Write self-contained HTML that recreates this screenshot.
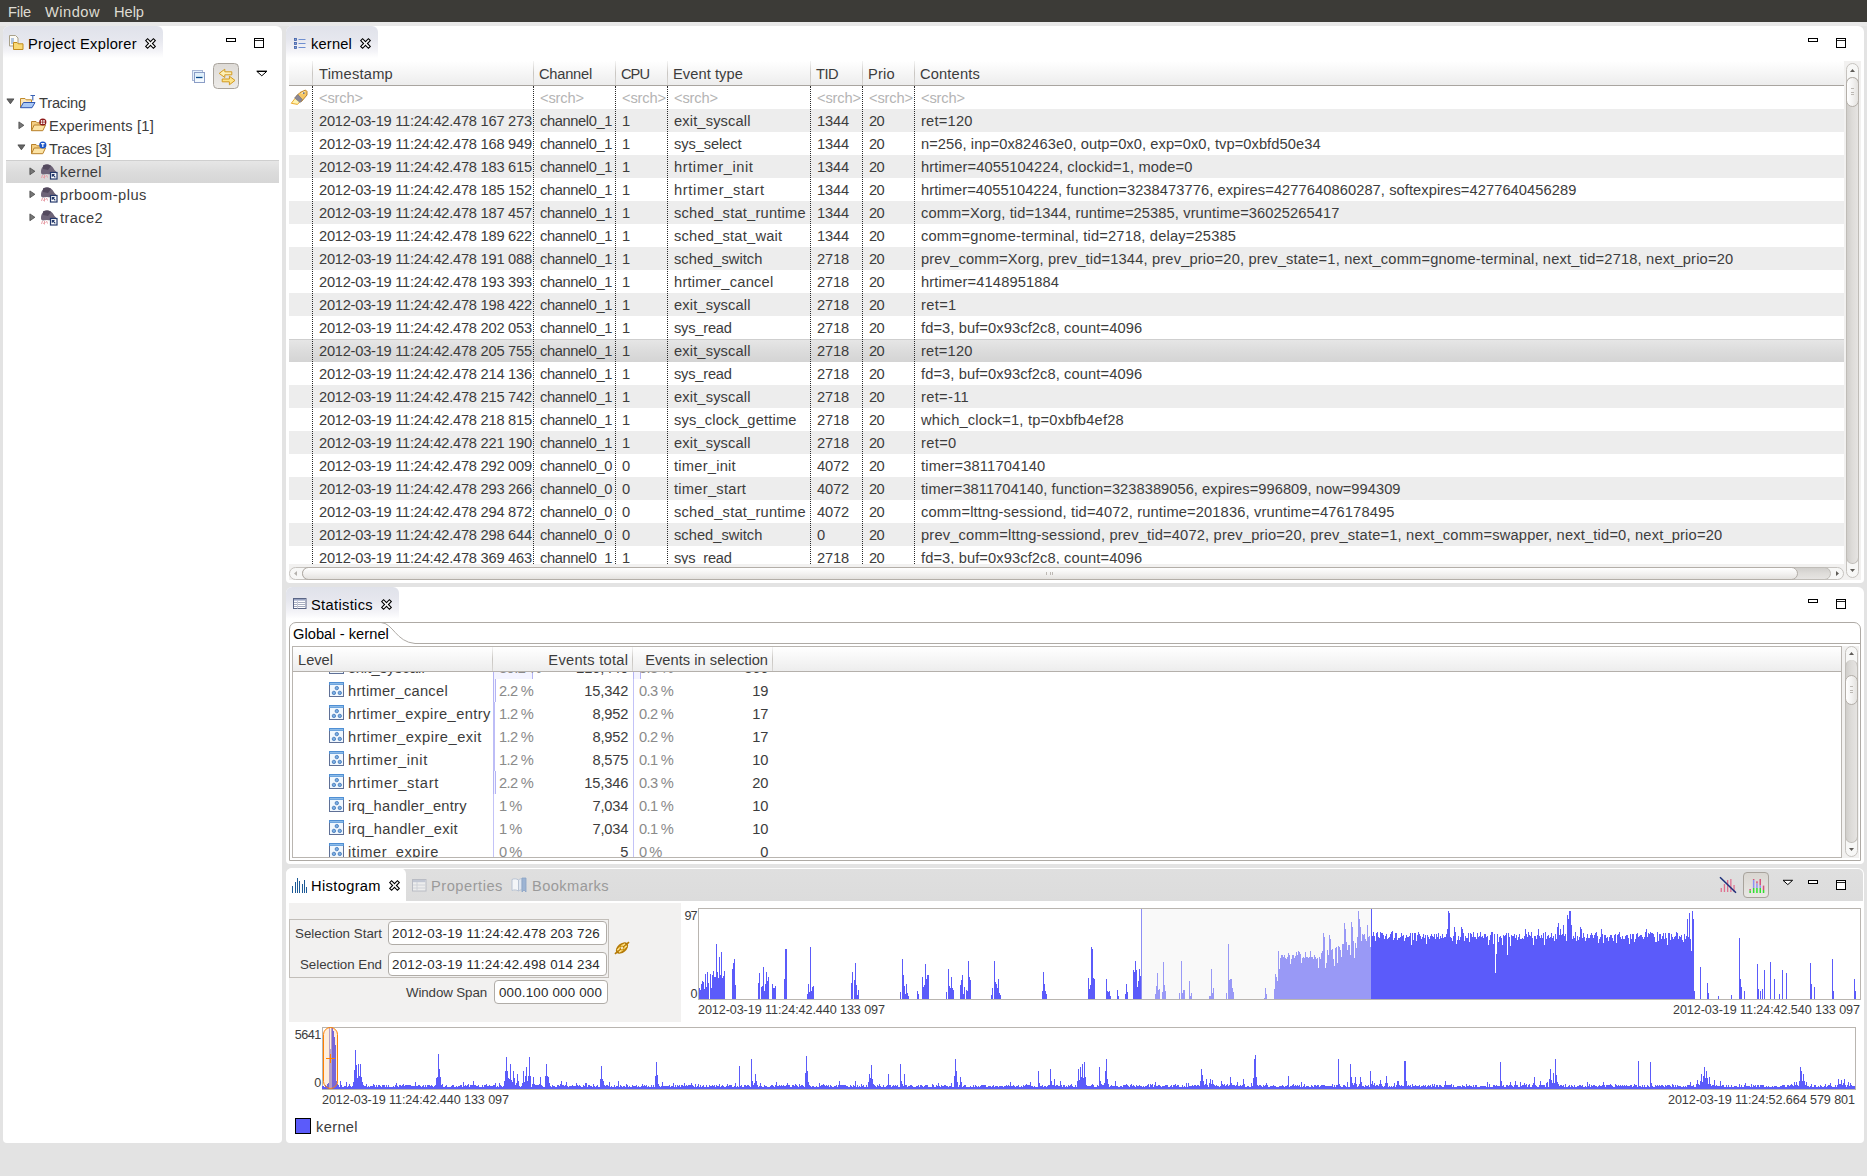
<!DOCTYPE html>
<html><head><meta charset="utf-8"><title>Tracing</title>
<style>
html,body{margin:0;padding:0;}
body{width:1867px;height:1176px;background:#e3e3e3;overflow:hidden;position:relative;font-family:"Liberation Sans",sans-serif;}
.t{position:absolute;white-space:pre;font-family:"Liberation Sans",sans-serif;}
.panel{position:absolute;background:#fff;border-radius:6px 6px 4px 4px;}
.tab{position:absolute;border-radius:6px 6px 0 0;background:linear-gradient(#e0e2ea 0%,#e6e7ee 40%,#f3f3f7 75%,#ffffff 97%);}
svg{position:absolute;overflow:visible;}
.vsep{position:absolute;width:0;border-left:1px dotted #2a2a2a;}
.hdr{position:absolute;background:linear-gradient(#ffffff 0%,#f7f7f7 45%,#ededed 100%);}
.hsep{position:absolute;width:1px;background:linear-gradient(#f4f4f4,#c9c6c2 50%,#d8d6d3);}
.fld{position:absolute;background:#fff;border:1px solid #b0aca7;border-radius:4px;box-sizing:border-box;}
</style></head><body>

<div class="" style="position:absolute;left:0px;top:0px;width:1867px;height:22px;background:#3c3b37;"></div>
<div class="" style="position:absolute;left:0px;top:22px;width:1867px;height:4px;background:#e8e8e8;"></div>
<span class="t " style="left:8px;top:1px;height:22px;line-height:22px;font-size:14.67px;color:#dfdbd2;letter-spacing:-0.160px;">File</span>
<span class="t " style="left:45px;top:1px;height:22px;line-height:22px;font-size:14.67px;color:#dfdbd2;letter-spacing:0.471px;">Window</span>
<span class="t " style="left:114px;top:1px;height:22px;line-height:22px;font-size:14.67px;color:#dfdbd2;letter-spacing:-0.043px;">Help</span>
<div class="panel" style="left:3px;top:26px;width:279px;height:1117px;"></div>
<div class="tab" style="left:3px;top:26px;width:160px;height:33px;"></div>
<svg style="left:8px;top:34px" width="17" height="17" viewBox="0 0 17 17">
<path d="M1.5 1.5 h6 l2.5 2.5 v8 h-8.5z" fill="#fbfaf5" stroke="#a9a18a" stroke-width="1"/>
<path d="M3 5h3M3 7h3M3 9h2" stroke="#6b8fc7" stroke-width="1"/>
<path d="M5.5 8.5 h3.5 l1.2 1.3 h4.8 v5.7 h-9.5z" fill="#f9d976" stroke="#c08a1c" stroke-width="1" stroke-linejoin="round"/>
</svg>
<span class="t " style="left:28px;top:27px;height:34px;line-height:34px;font-size:14.67px;color:#000;letter-spacing:0.290px;">Project Explorer</span>
<svg style="left:144.5px;top:37.5px" width="11" height="11" viewBox="0 0 11 11"><path d="M0.7 2.6 L2.6 0.7 L5.5 3.6 L8.4 0.7 L10.3 2.6 L7.4 5.5 L10.3 8.4 L8.4 10.3 L5.5 7.4 L2.6 10.3 L0.7 8.4 L3.6 5.5Z" fill="#fff" stroke="#000" stroke-width="1.1" stroke-linejoin="miter"/></svg>
<svg style="left:226px;top:38px" width="40" height="12"><rect x="0.5" y="0.5" width="9" height="3" fill="#fff" stroke="#000" stroke-width="1"/><rect x="28.5" y="0.5" width="9" height="9" fill="#fff" stroke="#000" stroke-width="1"/><rect x="29" y="2" width="8" height="1" fill="#222"/></svg>
<svg style="left:0px;top:0px" width="300" height="100" viewBox="0 0 300 100">
<rect x="192.5" y="70.5" width="10" height="10" fill="#e3f1fb" stroke="#a9b8d6"/>
<rect x="194.5" y="72.5" width="10" height="10" fill="#f4fafe" stroke="#8b9dc6"/>
<rect x="194.5" y="72.5" width="10" height="5" fill="#d9edf9" stroke="none" opacity="0.7"/>
<rect x="194.5" y="72.5" width="10" height="10" fill="none" stroke="#8b9dc6"/>
<path d="M196 77.5h6.5" stroke="#0a4a8c" stroke-width="1.3"/></svg>
<div class="" style="position:absolute;left:213px;top:63px;width:26px;height:26px;border:1px solid #a8a39c;border-radius:4.5px;background:linear-gradient(#dedbd7,#edebe8);box-sizing:border-box;"></div>
<svg style="left:0px;top:0px" width="300" height="100" viewBox="0 0 300 100">
<path d="M219.2 73.4 L224.8 69.2 V71.8 H231.8 V74.8 H224.8 V77.5Z" fill="#fdf0b8" stroke="#d39a1e" stroke-width="1" stroke-linejoin="round"/>
<path d="M235 80.4 L229.4 76.2 V79 H222.2 V81.8 H229.4 V84.8Z" fill="#fde48a" stroke="#d39a1e" stroke-width="1" stroke-linejoin="round"/></svg>
<svg style="left:256px;top:70px" width="12" height="8" viewBox="0 0 12 8"><path d="M1 1.5 H10.6 L5.8 5.8Z" fill="#fff" stroke="#000" stroke-width="1"/><path d="M0.6 1.2H11" stroke="#000" stroke-width="1.2"/></svg>
<div class="" style="position:absolute;left:6px;top:160px;width:273px;height:23px;background:linear-gradient(#e6e6e6,#dcdcdc 50%,#d6d6d6);border-top:1px solid #cfcfcf;box-sizing:border-box;"></div>
<svg style="left:6px;top:98px" width="9" height="7" viewBox="0 0 9 7"><path d="M0.9 0.9 H7.9 L4.4 5.8Z" fill="#666" stroke="#444" stroke-width="0.8"/></svg>
<svg style="left:19px;top:94px" width="18" height="16" viewBox="0 0 18 16"><path d="M1.5 13.5 V4.5 h4.5 l1.2 1.3 h5.3 v2.2" fill="#fbe7bd" stroke="#c08a2a" stroke-width="1"/><path d="M1.5 13.7 L4.5 8.5 H16 L13 13.7Z" fill="#a9c8f5" stroke="#2f55b0" stroke-width="1" stroke-linejoin="round"/><path d="M11.5 1.5h4.5M13.8 1.5v5" stroke="#3a62b5" stroke-width="1.1"/></svg>
<span class="t " style="left:39px;top:92px;height:23px;line-height:23px;font-size:14.67px;color:#3c3c3c;letter-spacing:-0.196px;">Tracing</span>
<svg style="left:18px;top:121px" width="7" height="9" viewBox="0 0 7 9"><path d="M0.9 0.9 V7.7 L5.9 4.3Z" fill="#777" stroke="#4a4a4a" stroke-width="0.8"/></svg>
<svg style="left:30px;top:117px" width="18" height="16" viewBox="0 0 18 16"><path d="M1.5 13.5 V4.5 h4.5 l1.2 1.3 h6.3 v2" fill="#f4cf84" stroke="#b8802a" stroke-width="1"/><path d="M1.5 13.7 L4.2 8 H15.5 L12.8 13.7Z" fill="#fce3a4" stroke="#b8802a" stroke-width="1" stroke-linejoin="round"/><circle cx="12.8" cy="5" r="3.6" fill="#8e1a1a"/><circle cx="11.6" cy="3.9" r="0.9" fill="#fff"/><circle cx="14" cy="3.9" r="0.9" fill="#fff"/><circle cx="11.6" cy="6.2" r="0.9" fill="#fff"/><circle cx="14" cy="6.2" r="0.9" fill="#fff"/></svg>
<span class="t " style="left:49px;top:115px;height:23px;line-height:23px;font-size:14.67px;color:#3c3c3c;letter-spacing:0.206px;">Experiments [1]</span>
<svg style="left:17px;top:144px" width="9" height="7" viewBox="0 0 9 7"><path d="M0.9 0.9 H7.9 L4.4 5.8Z" fill="#666" stroke="#444" stroke-width="0.8"/></svg>
<svg style="left:30px;top:140px" width="18" height="16" viewBox="0 0 18 16"><path d="M1.5 13.5 V4.5 h4.5 l1.2 1.3 h6.3 v2" fill="#f4cf84" stroke="#b8802a" stroke-width="1"/><path d="M1.5 13.7 L4.2 8 H15.5 L12.8 13.7Z" fill="#fce3a4" stroke="#b8802a" stroke-width="1" stroke-linejoin="round"/><circle cx="12.8" cy="5" r="3.6" fill="#1c55c7"/><path d="M11.1 3.6h3.4M12.8 3.6v3.4" stroke="#fff" stroke-width="1.2"/></svg>
<span class="t " style="left:49px;top:138px;height:23px;line-height:23px;font-size:14.67px;color:#3c3c3c;letter-spacing:-0.268px;">Traces [3]</span>
<svg style="left:29px;top:167px" width="7" height="9" viewBox="0 0 7 9"><path d="M0.9 0.9 V7.7 L5.9 4.3Z" fill="#777" stroke="#4a4a4a" stroke-width="0.8"/></svg>
<svg style="left:40px;top:163px" width="18" height="18" viewBox="0 0 18 18">
<path d="M1 9 C1 4 4 1.5 7.5 1.5 C11 1.5 13 4 14.5 7 L17 9.5 L13 10.5 C11 11.5 9 11.5 7 11 L3 11.5 C1.5 11.5 1 10.5 1 9Z" fill="#6e6478"/>
<path d="M3 2.5 C5 1 9 1 11 3 L8 7 L3 6Z" fill="#544a5e"/>
<path d="M2.5 12 l-1 3 M4.5 12 l0 3.5 M6.5 12 l1 2.5 M3 14.5 l2.5 -1" stroke="#e8a0a8" stroke-width="1"/>
<rect x="10.5" y="9.5" width="6.5" height="6.5" fill="#fff" stroke="#23386b" stroke-width="1.2"/>
<path d="M15.3 14.3 L12.5 11.5 M12.3 13.8 V11.5 H14.6" stroke="#23386b" stroke-width="1.1" fill="none"/></svg>
<span class="t " style="left:60px;top:161px;height:23px;line-height:23px;font-size:14.67px;color:#3c3c3c;letter-spacing:0.341px;">kernel</span>
<svg style="left:29px;top:190px" width="7" height="9" viewBox="0 0 7 9"><path d="M0.9 0.9 V7.7 L5.9 4.3Z" fill="#777" stroke="#4a4a4a" stroke-width="0.8"/></svg>
<svg style="left:40px;top:186px" width="18" height="18" viewBox="0 0 18 18">
<path d="M1 9 C1 4 4 1.5 7.5 1.5 C11 1.5 13 4 14.5 7 L17 9.5 L13 10.5 C11 11.5 9 11.5 7 11 L3 11.5 C1.5 11.5 1 10.5 1 9Z" fill="#6e6478"/>
<path d="M3 2.5 C5 1 9 1 11 3 L8 7 L3 6Z" fill="#544a5e"/>
<path d="M2.5 12 l-1 3 M4.5 12 l0 3.5 M6.5 12 l1 2.5 M3 14.5 l2.5 -1" stroke="#e8a0a8" stroke-width="1"/>
<rect x="10.5" y="9.5" width="6.5" height="6.5" fill="#fff" stroke="#23386b" stroke-width="1.2"/>
<path d="M15.3 14.3 L12.5 11.5 M12.3 13.8 V11.5 H14.6" stroke="#23386b" stroke-width="1.1" fill="none"/></svg>
<span class="t " style="left:60px;top:184px;height:23px;line-height:23px;font-size:14.67px;color:#3c3c3c;letter-spacing:0.497px;">prboom-plus</span>
<svg style="left:29px;top:213px" width="7" height="9" viewBox="0 0 7 9"><path d="M0.9 0.9 V7.7 L5.9 4.3Z" fill="#777" stroke="#4a4a4a" stroke-width="0.8"/></svg>
<svg style="left:40px;top:209px" width="18" height="18" viewBox="0 0 18 18">
<path d="M1 9 C1 4 4 1.5 7.5 1.5 C11 1.5 13 4 14.5 7 L17 9.5 L13 10.5 C11 11.5 9 11.5 7 11 L3 11.5 C1.5 11.5 1 10.5 1 9Z" fill="#6e6478"/>
<path d="M3 2.5 C5 1 9 1 11 3 L8 7 L3 6Z" fill="#544a5e"/>
<path d="M2.5 12 l-1 3 M4.5 12 l0 3.5 M6.5 12 l1 2.5 M3 14.5 l2.5 -1" stroke="#e8a0a8" stroke-width="1"/>
<rect x="10.5" y="9.5" width="6.5" height="6.5" fill="#fff" stroke="#23386b" stroke-width="1.2"/>
<path d="M15.3 14.3 L12.5 11.5 M12.3 13.8 V11.5 H14.6" stroke="#23386b" stroke-width="1.1" fill="none"/></svg>
<span class="t " style="left:60px;top:207px;height:23px;line-height:23px;font-size:14.67px;color:#3c3c3c;letter-spacing:0.371px;">trace2</span>
<div class="panel" style="left:286px;top:26px;width:1578px;height:557px;"></div>
<div class="tab" style="left:286px;top:26px;width:92px;height:33px;"></div>
<svg style="left:294px;top:38px" width="12" height="12" viewBox="0 0 12 12">
<rect x="0.5" y="0.5" width="2" height="2" fill="#8aa2d4" stroke="#3f5fa8" stroke-width="0.8"/><rect x="0.5" y="4.5" width="2" height="2" fill="#8aa2d4" stroke="#3f5fa8" stroke-width="0.8"/><rect x="0.5" y="8.5" width="2" height="2" fill="#8aa2d4" stroke="#3f5fa8" stroke-width="0.8"/>
<path d="M4.5 1.5h7M4.5 5.5h7M4.5 9.5h7" stroke="#6f8fd0" stroke-width="1"/></svg>
<span class="t " style="left:311px;top:27px;height:34px;line-height:34px;font-size:14.67px;color:#000;letter-spacing:0.174px;">kernel</span>
<svg style="left:359.5px;top:37.5px" width="11" height="11" viewBox="0 0 11 11"><path d="M0.7 2.6 L2.6 0.7 L5.5 3.6 L8.4 0.7 L10.3 2.6 L7.4 5.5 L10.3 8.4 L8.4 10.3 L5.5 7.4 L2.6 10.3 L0.7 8.4 L3.6 5.5Z" fill="#fff" stroke="#000" stroke-width="1.1" stroke-linejoin="miter"/></svg>
<svg style="left:1808px;top:38px" width="40" height="12"><rect x="0.5" y="0.5" width="9" height="3" fill="#fff" stroke="#000" stroke-width="1"/><rect x="28.5" y="0.5" width="9" height="9" fill="#fff" stroke="#000" stroke-width="1"/><rect x="29" y="2" width="8" height="1" fill="#222"/></svg>
<div class="" style="position:absolute;left:289px;top:61px;width:1572px;height:519px;background:#f2f1f0;"></div>
<div class="hdr" style="left:289px;top:61px;width:1555px;height:24px;"></div>
<div class="" style="position:absolute;left:289px;top:85px;width:1555px;height:1px;background:#a9a5a0;"></div>
<div class="" style="position:absolute;left:289px;top:86px;width:1555px;height:478px;background:#fff;"></div>
<div style="position:absolute;left:0;top:86px;width:1867px;height:478px;overflow:hidden;"><div style="position:absolute;left:0;top:-86px;width:1867px;height:1176px;">
<div class="" style="position:absolute;left:289px;top:109px;width:1555px;height:23px;background:#ededed;"></div>
<div class="" style="position:absolute;left:289px;top:155px;width:1555px;height:23px;background:#ededed;"></div>
<div class="" style="position:absolute;left:289px;top:201px;width:1555px;height:23px;background:#ededed;"></div>
<div class="" style="position:absolute;left:289px;top:247px;width:1555px;height:23px;background:#ededed;"></div>
<div class="" style="position:absolute;left:289px;top:293px;width:1555px;height:23px;background:#ededed;"></div>
<div class="" style="position:absolute;left:289px;top:339px;width:1555px;height:23px;background:linear-gradient(#e6e6e6,#dcdcdc 50%,#d4d4d4);border-top:1px solid #cfcfcf;box-sizing:border-box;"></div>
<div class="" style="position:absolute;left:289px;top:385px;width:1555px;height:23px;background:#ededed;"></div>
<div class="" style="position:absolute;left:289px;top:431px;width:1555px;height:23px;background:#ededed;"></div>
<div class="" style="position:absolute;left:289px;top:477px;width:1555px;height:23px;background:#ededed;"></div>
<div class="" style="position:absolute;left:289px;top:523px;width:1555px;height:23px;background:#ededed;"></div>
<span class="t " style="left:319px;top:87px;height:23px;line-height:23px;font-size:14.67px;color:#b4b4b4;letter-spacing:-0.141px;">&lt;srch&gt;</span>
<span class="t " style="left:540px;top:87px;height:23px;line-height:23px;font-size:14.67px;color:#b4b4b4;letter-spacing:-0.141px;">&lt;srch&gt;</span>
<span class="t " style="left:622px;top:87px;height:23px;line-height:23px;font-size:14.67px;color:#b4b4b4;letter-spacing:-0.141px;">&lt;srch&gt;</span>
<span class="t " style="left:674px;top:87px;height:23px;line-height:23px;font-size:14.67px;color:#b4b4b4;letter-spacing:-0.141px;">&lt;srch&gt;</span>
<span class="t " style="left:817px;top:87px;height:23px;line-height:23px;font-size:14.67px;color:#b4b4b4;letter-spacing:-0.141px;">&lt;srch&gt;</span>
<span class="t " style="left:869px;top:87px;height:23px;line-height:23px;font-size:14.67px;color:#b4b4b4;letter-spacing:-0.141px;">&lt;srch&gt;</span>
<span class="t " style="left:921px;top:87px;height:23px;line-height:23px;font-size:14.67px;color:#b4b4b4;letter-spacing:-0.141px;">&lt;srch&gt;</span>
<span class="t " style="left:319px;top:110px;height:23px;line-height:23px;font-size:14.67px;color:#3c3c3c;letter-spacing:-0.251px;">2012-03-19 11:24:42.478 167 273</span>
<span class="t " style="left:540px;top:110px;height:23px;line-height:23px;font-size:14.67px;color:#3c3c3c;letter-spacing:-0.386px;">channel0_1</span>
<span class="t " style="left:622px;top:110px;height:23px;line-height:23px;font-size:14.67px;color:#3c3c3c;letter-spacing:-0.082px;">1</span>
<span class="t " style="left:674px;top:110px;height:23px;line-height:23px;font-size:14.67px;color:#3c3c3c;letter-spacing:0.141px;">exit_syscall</span>
<span class="t " style="left:817px;top:110px;height:23px;line-height:23px;font-size:14.67px;color:#3c3c3c;letter-spacing:-0.159px;">1344</span>
<span class="t " style="left:869px;top:110px;height:23px;line-height:23px;font-size:14.67px;color:#3c3c3c;letter-spacing:-0.659px;">20</span>
<span class="t " style="left:921px;top:110px;height:23px;line-height:23px;font-size:14.67px;color:#3c3c3c;letter-spacing:0.222px;">ret=120</span>
<span class="t " style="left:319px;top:133px;height:23px;line-height:23px;font-size:14.67px;color:#3c3c3c;letter-spacing:-0.251px;">2012-03-19 11:24:42.478 168 949</span>
<span class="t " style="left:540px;top:133px;height:23px;line-height:23px;font-size:14.67px;color:#3c3c3c;letter-spacing:-0.386px;">channel0_1</span>
<span class="t " style="left:622px;top:133px;height:23px;line-height:23px;font-size:14.67px;color:#3c3c3c;letter-spacing:-0.082px;">1</span>
<span class="t " style="left:674px;top:133px;height:23px;line-height:23px;font-size:14.67px;color:#3c3c3c;letter-spacing:-0.099px;">sys_select</span>
<span class="t " style="left:817px;top:133px;height:23px;line-height:23px;font-size:14.67px;color:#3c3c3c;letter-spacing:-0.159px;">1344</span>
<span class="t " style="left:869px;top:133px;height:23px;line-height:23px;font-size:14.67px;color:#3c3c3c;letter-spacing:-0.659px;">20</span>
<span class="t " style="left:921px;top:133px;height:23px;line-height:23px;font-size:14.67px;color:#3c3c3c;letter-spacing:0.072px;">n=256, inp=0x82463e0, outp=0x0, exp=0x0, tvp=0xbfd50e34</span>
<span class="t " style="left:319px;top:156px;height:23px;line-height:23px;font-size:14.67px;color:#3c3c3c;letter-spacing:-0.251px;">2012-03-19 11:24:42.478 183 615</span>
<span class="t " style="left:540px;top:156px;height:23px;line-height:23px;font-size:14.67px;color:#3c3c3c;letter-spacing:-0.386px;">channel0_1</span>
<span class="t " style="left:622px;top:156px;height:23px;line-height:23px;font-size:14.67px;color:#3c3c3c;letter-spacing:-0.082px;">1</span>
<span class="t " style="left:674px;top:156px;height:23px;line-height:23px;font-size:14.67px;color:#3c3c3c;letter-spacing:0.587px;">hrtimer_init</span>
<span class="t " style="left:817px;top:156px;height:23px;line-height:23px;font-size:14.67px;color:#3c3c3c;letter-spacing:-0.159px;">1344</span>
<span class="t " style="left:869px;top:156px;height:23px;line-height:23px;font-size:14.67px;color:#3c3c3c;letter-spacing:-0.659px;">20</span>
<span class="t " style="left:921px;top:156px;height:23px;line-height:23px;font-size:14.67px;color:#3c3c3c;letter-spacing:0.127px;">hrtimer=4055104224, clockid=1, mode=0</span>
<span class="t " style="left:319px;top:179px;height:23px;line-height:23px;font-size:14.67px;color:#3c3c3c;letter-spacing:-0.251px;">2012-03-19 11:24:42.478 185 152</span>
<span class="t " style="left:540px;top:179px;height:23px;line-height:23px;font-size:14.67px;color:#3c3c3c;letter-spacing:-0.386px;">channel0_1</span>
<span class="t " style="left:622px;top:179px;height:23px;line-height:23px;font-size:14.67px;color:#3c3c3c;letter-spacing:-0.082px;">1</span>
<span class="t " style="left:674px;top:179px;height:23px;line-height:23px;font-size:14.67px;color:#3c3c3c;letter-spacing:0.651px;">hrtimer_start</span>
<span class="t " style="left:817px;top:179px;height:23px;line-height:23px;font-size:14.67px;color:#3c3c3c;letter-spacing:-0.159px;">1344</span>
<span class="t " style="left:869px;top:179px;height:23px;line-height:23px;font-size:14.67px;color:#3c3c3c;letter-spacing:-0.659px;">20</span>
<span class="t " style="left:921px;top:179px;height:23px;line-height:23px;font-size:14.67px;color:#3c3c3c;letter-spacing:0.076px;">hrtimer=4055104224, function=3238473776, expires=4277640860287, softexpires=4277640456289</span>
<span class="t " style="left:319px;top:202px;height:23px;line-height:23px;font-size:14.67px;color:#3c3c3c;letter-spacing:-0.251px;">2012-03-19 11:24:42.478 187 457</span>
<span class="t " style="left:540px;top:202px;height:23px;line-height:23px;font-size:14.67px;color:#3c3c3c;letter-spacing:-0.386px;">channel0_1</span>
<span class="t " style="left:622px;top:202px;height:23px;line-height:23px;font-size:14.67px;color:#3c3c3c;letter-spacing:-0.082px;">1</span>
<span class="t " style="left:674px;top:202px;height:23px;line-height:23px;font-size:14.67px;color:#3c3c3c;letter-spacing:0.221px;">sched_stat_runtime</span>
<span class="t " style="left:817px;top:202px;height:23px;line-height:23px;font-size:14.67px;color:#3c3c3c;letter-spacing:-0.159px;">1344</span>
<span class="t " style="left:869px;top:202px;height:23px;line-height:23px;font-size:14.67px;color:#3c3c3c;letter-spacing:-0.659px;">20</span>
<span class="t " style="left:921px;top:202px;height:23px;line-height:23px;font-size:14.67px;color:#3c3c3c;letter-spacing:0.098px;">comm=Xorg, tid=1344, runtime=25385, vruntime=36025265417</span>
<span class="t " style="left:319px;top:225px;height:23px;line-height:23px;font-size:14.67px;color:#3c3c3c;letter-spacing:-0.251px;">2012-03-19 11:24:42.478 189 622</span>
<span class="t " style="left:540px;top:225px;height:23px;line-height:23px;font-size:14.67px;color:#3c3c3c;letter-spacing:-0.386px;">channel0_1</span>
<span class="t " style="left:622px;top:225px;height:23px;line-height:23px;font-size:14.67px;color:#3c3c3c;letter-spacing:-0.082px;">1</span>
<span class="t " style="left:674px;top:225px;height:23px;line-height:23px;font-size:14.67px;color:#3c3c3c;letter-spacing:0.214px;">sched_stat_wait</span>
<span class="t " style="left:817px;top:225px;height:23px;line-height:23px;font-size:14.67px;color:#3c3c3c;letter-spacing:-0.159px;">1344</span>
<span class="t " style="left:869px;top:225px;height:23px;line-height:23px;font-size:14.67px;color:#3c3c3c;letter-spacing:-0.659px;">20</span>
<span class="t " style="left:921px;top:225px;height:23px;line-height:23px;font-size:14.67px;color:#3c3c3c;letter-spacing:0.182px;">comm=gnome-terminal, tid=2718, delay=25385</span>
<span class="t " style="left:319px;top:248px;height:23px;line-height:23px;font-size:14.67px;color:#3c3c3c;letter-spacing:-0.251px;">2012-03-19 11:24:42.478 191 088</span>
<span class="t " style="left:540px;top:248px;height:23px;line-height:23px;font-size:14.67px;color:#3c3c3c;letter-spacing:-0.386px;">channel0_1</span>
<span class="t " style="left:622px;top:248px;height:23px;line-height:23px;font-size:14.67px;color:#3c3c3c;letter-spacing:-0.082px;">1</span>
<span class="t " style="left:674px;top:248px;height:23px;line-height:23px;font-size:14.67px;color:#3c3c3c;letter-spacing:0.028px;">sched_switch</span>
<span class="t " style="left:817px;top:248px;height:23px;line-height:23px;font-size:14.67px;color:#3c3c3c;letter-spacing:-0.159px;">2718</span>
<span class="t " style="left:869px;top:248px;height:23px;line-height:23px;font-size:14.67px;color:#3c3c3c;letter-spacing:-0.659px;">20</span>
<span class="t " style="left:921px;top:248px;height:23px;line-height:23px;font-size:14.67px;color:#3c3c3c;letter-spacing:0.171px;">prev_comm=Xorg, prev_tid=1344, prev_prio=20, prev_state=1, next_comm=gnome-terminal, next_tid=2718, next_prio=20</span>
<span class="t " style="left:319px;top:271px;height:23px;line-height:23px;font-size:14.67px;color:#3c3c3c;letter-spacing:-0.251px;">2012-03-19 11:24:42.478 193 393</span>
<span class="t " style="left:540px;top:271px;height:23px;line-height:23px;font-size:14.67px;color:#3c3c3c;letter-spacing:-0.386px;">channel0_1</span>
<span class="t " style="left:622px;top:271px;height:23px;line-height:23px;font-size:14.67px;color:#3c3c3c;letter-spacing:-0.082px;">1</span>
<span class="t " style="left:674px;top:271px;height:23px;line-height:23px;font-size:14.67px;color:#3c3c3c;letter-spacing:0.242px;">hrtimer_cancel</span>
<span class="t " style="left:817px;top:271px;height:23px;line-height:23px;font-size:14.67px;color:#3c3c3c;letter-spacing:-0.159px;">2718</span>
<span class="t " style="left:869px;top:271px;height:23px;line-height:23px;font-size:14.67px;color:#3c3c3c;letter-spacing:-0.659px;">20</span>
<span class="t " style="left:921px;top:271px;height:23px;line-height:23px;font-size:14.67px;color:#3c3c3c;letter-spacing:0.138px;">hrtimer=4148951884</span>
<span class="t " style="left:319px;top:294px;height:23px;line-height:23px;font-size:14.67px;color:#3c3c3c;letter-spacing:-0.251px;">2012-03-19 11:24:42.478 198 422</span>
<span class="t " style="left:540px;top:294px;height:23px;line-height:23px;font-size:14.67px;color:#3c3c3c;letter-spacing:-0.386px;">channel0_1</span>
<span class="t " style="left:622px;top:294px;height:23px;line-height:23px;font-size:14.67px;color:#3c3c3c;letter-spacing:-0.082px;">1</span>
<span class="t " style="left:674px;top:294px;height:23px;line-height:23px;font-size:14.67px;color:#3c3c3c;letter-spacing:0.141px;">exit_syscall</span>
<span class="t " style="left:817px;top:294px;height:23px;line-height:23px;font-size:14.67px;color:#3c3c3c;letter-spacing:-0.159px;">2718</span>
<span class="t " style="left:869px;top:294px;height:23px;line-height:23px;font-size:14.67px;color:#3c3c3c;letter-spacing:-0.659px;">20</span>
<span class="t " style="left:921px;top:294px;height:23px;line-height:23px;font-size:14.67px;color:#3c3c3c;letter-spacing:0.343px;">ret=1</span>
<span class="t " style="left:319px;top:317px;height:23px;line-height:23px;font-size:14.67px;color:#3c3c3c;letter-spacing:-0.251px;">2012-03-19 11:24:42.478 202 053</span>
<span class="t " style="left:540px;top:317px;height:23px;line-height:23px;font-size:14.67px;color:#3c3c3c;letter-spacing:-0.386px;">channel0_1</span>
<span class="t " style="left:622px;top:317px;height:23px;line-height:23px;font-size:14.67px;color:#3c3c3c;letter-spacing:-0.082px;">1</span>
<span class="t " style="left:674px;top:317px;height:23px;line-height:23px;font-size:14.67px;color:#3c3c3c;letter-spacing:-0.228px;">sys_read</span>
<span class="t " style="left:817px;top:317px;height:23px;line-height:23px;font-size:14.67px;color:#3c3c3c;letter-spacing:-0.159px;">2718</span>
<span class="t " style="left:869px;top:317px;height:23px;line-height:23px;font-size:14.67px;color:#3c3c3c;letter-spacing:-0.659px;">20</span>
<span class="t " style="left:921px;top:317px;height:23px;line-height:23px;font-size:14.67px;color:#3c3c3c;letter-spacing:0.102px;">fd=3, buf=0x93cf2c8, count=4096</span>
<span class="t " style="left:319px;top:340px;height:23px;line-height:23px;font-size:14.67px;color:#3c3c3c;letter-spacing:-0.251px;">2012-03-19 11:24:42.478 205 755</span>
<span class="t " style="left:540px;top:340px;height:23px;line-height:23px;font-size:14.67px;color:#3c3c3c;letter-spacing:-0.386px;">channel0_1</span>
<span class="t " style="left:622px;top:340px;height:23px;line-height:23px;font-size:14.67px;color:#3c3c3c;letter-spacing:-0.082px;">1</span>
<span class="t " style="left:674px;top:340px;height:23px;line-height:23px;font-size:14.67px;color:#3c3c3c;letter-spacing:0.141px;">exit_syscall</span>
<span class="t " style="left:817px;top:340px;height:23px;line-height:23px;font-size:14.67px;color:#3c3c3c;letter-spacing:-0.159px;">2718</span>
<span class="t " style="left:869px;top:340px;height:23px;line-height:23px;font-size:14.67px;color:#3c3c3c;letter-spacing:-0.659px;">20</span>
<span class="t " style="left:921px;top:340px;height:23px;line-height:23px;font-size:14.67px;color:#3c3c3c;letter-spacing:0.222px;">ret=120</span>
<span class="t " style="left:319px;top:363px;height:23px;line-height:23px;font-size:14.67px;color:#3c3c3c;letter-spacing:-0.251px;">2012-03-19 11:24:42.478 214 136</span>
<span class="t " style="left:540px;top:363px;height:23px;line-height:23px;font-size:14.67px;color:#3c3c3c;letter-spacing:-0.386px;">channel0_1</span>
<span class="t " style="left:622px;top:363px;height:23px;line-height:23px;font-size:14.67px;color:#3c3c3c;letter-spacing:-0.082px;">1</span>
<span class="t " style="left:674px;top:363px;height:23px;line-height:23px;font-size:14.67px;color:#3c3c3c;letter-spacing:-0.228px;">sys_read</span>
<span class="t " style="left:817px;top:363px;height:23px;line-height:23px;font-size:14.67px;color:#3c3c3c;letter-spacing:-0.159px;">2718</span>
<span class="t " style="left:869px;top:363px;height:23px;line-height:23px;font-size:14.67px;color:#3c3c3c;letter-spacing:-0.659px;">20</span>
<span class="t " style="left:921px;top:363px;height:23px;line-height:23px;font-size:14.67px;color:#3c3c3c;letter-spacing:0.102px;">fd=3, buf=0x93cf2c8, count=4096</span>
<span class="t " style="left:319px;top:386px;height:23px;line-height:23px;font-size:14.67px;color:#3c3c3c;letter-spacing:-0.251px;">2012-03-19 11:24:42.478 215 742</span>
<span class="t " style="left:540px;top:386px;height:23px;line-height:23px;font-size:14.67px;color:#3c3c3c;letter-spacing:-0.386px;">channel0_1</span>
<span class="t " style="left:622px;top:386px;height:23px;line-height:23px;font-size:14.67px;color:#3c3c3c;letter-spacing:-0.082px;">1</span>
<span class="t " style="left:674px;top:386px;height:23px;line-height:23px;font-size:14.67px;color:#3c3c3c;letter-spacing:0.141px;">exit_syscall</span>
<span class="t " style="left:817px;top:386px;height:23px;line-height:23px;font-size:14.67px;color:#3c3c3c;letter-spacing:-0.159px;">2718</span>
<span class="t " style="left:869px;top:386px;height:23px;line-height:23px;font-size:14.67px;color:#3c3c3c;letter-spacing:-0.659px;">20</span>
<span class="t " style="left:921px;top:386px;height:23px;line-height:23px;font-size:14.67px;color:#3c3c3c;letter-spacing:0.324px;">ret=-11</span>
<span class="t " style="left:319px;top:409px;height:23px;line-height:23px;font-size:14.67px;color:#3c3c3c;letter-spacing:-0.251px;">2012-03-19 11:24:42.478 218 815</span>
<span class="t " style="left:540px;top:409px;height:23px;line-height:23px;font-size:14.67px;color:#3c3c3c;letter-spacing:-0.386px;">channel0_1</span>
<span class="t " style="left:622px;top:409px;height:23px;line-height:23px;font-size:14.67px;color:#3c3c3c;letter-spacing:-0.082px;">1</span>
<span class="t " style="left:674px;top:409px;height:23px;line-height:23px;font-size:14.67px;color:#3c3c3c;letter-spacing:0.167px;">sys_clock_gettime</span>
<span class="t " style="left:817px;top:409px;height:23px;line-height:23px;font-size:14.67px;color:#3c3c3c;letter-spacing:-0.159px;">2718</span>
<span class="t " style="left:869px;top:409px;height:23px;line-height:23px;font-size:14.67px;color:#3c3c3c;letter-spacing:-0.659px;">20</span>
<span class="t " style="left:921px;top:409px;height:23px;line-height:23px;font-size:14.67px;color:#3c3c3c;letter-spacing:0.203px;">which_clock=1, tp=0xbfb4ef28</span>
<span class="t " style="left:319px;top:432px;height:23px;line-height:23px;font-size:14.67px;color:#3c3c3c;letter-spacing:-0.251px;">2012-03-19 11:24:42.478 221 190</span>
<span class="t " style="left:540px;top:432px;height:23px;line-height:23px;font-size:14.67px;color:#3c3c3c;letter-spacing:-0.386px;">channel0_1</span>
<span class="t " style="left:622px;top:432px;height:23px;line-height:23px;font-size:14.67px;color:#3c3c3c;letter-spacing:-0.082px;">1</span>
<span class="t " style="left:674px;top:432px;height:23px;line-height:23px;font-size:14.67px;color:#3c3c3c;letter-spacing:0.141px;">exit_syscall</span>
<span class="t " style="left:817px;top:432px;height:23px;line-height:23px;font-size:14.67px;color:#3c3c3c;letter-spacing:-0.159px;">2718</span>
<span class="t " style="left:869px;top:432px;height:23px;line-height:23px;font-size:14.67px;color:#3c3c3c;letter-spacing:-0.659px;">20</span>
<span class="t " style="left:921px;top:432px;height:23px;line-height:23px;font-size:14.67px;color:#3c3c3c;letter-spacing:0.343px;">ret=0</span>
<span class="t " style="left:319px;top:455px;height:23px;line-height:23px;font-size:14.67px;color:#3c3c3c;letter-spacing:-0.251px;">2012-03-19 11:24:42.478 292 009</span>
<span class="t " style="left:540px;top:455px;height:23px;line-height:23px;font-size:14.67px;color:#3c3c3c;letter-spacing:-0.386px;">channel0_0</span>
<span class="t " style="left:622px;top:455px;height:23px;line-height:23px;font-size:14.67px;color:#3c3c3c;letter-spacing:-0.082px;">0</span>
<span class="t " style="left:674px;top:455px;height:23px;line-height:23px;font-size:14.67px;color:#3c3c3c;letter-spacing:0.237px;">timer_init</span>
<span class="t " style="left:817px;top:455px;height:23px;line-height:23px;font-size:14.67px;color:#3c3c3c;letter-spacing:-0.159px;">4072</span>
<span class="t " style="left:869px;top:455px;height:23px;line-height:23px;font-size:14.67px;color:#3c3c3c;letter-spacing:-0.659px;">20</span>
<span class="t " style="left:921px;top:455px;height:23px;line-height:23px;font-size:14.67px;color:#3c3c3c;letter-spacing:0.180px;">timer=3811704140</span>
<span class="t " style="left:319px;top:478px;height:23px;line-height:23px;font-size:14.67px;color:#3c3c3c;letter-spacing:-0.251px;">2012-03-19 11:24:42.478 293 266</span>
<span class="t " style="left:540px;top:478px;height:23px;line-height:23px;font-size:14.67px;color:#3c3c3c;letter-spacing:-0.386px;">channel0_0</span>
<span class="t " style="left:622px;top:478px;height:23px;line-height:23px;font-size:14.67px;color:#3c3c3c;letter-spacing:-0.082px;">0</span>
<span class="t " style="left:674px;top:478px;height:23px;line-height:23px;font-size:14.67px;color:#3c3c3c;letter-spacing:0.262px;">timer_start</span>
<span class="t " style="left:817px;top:478px;height:23px;line-height:23px;font-size:14.67px;color:#3c3c3c;letter-spacing:-0.159px;">4072</span>
<span class="t " style="left:869px;top:478px;height:23px;line-height:23px;font-size:14.67px;color:#3c3c3c;letter-spacing:-0.659px;">20</span>
<span class="t " style="left:921px;top:478px;height:23px;line-height:23px;font-size:14.67px;color:#3c3c3c;letter-spacing:0.048px;">timer=3811704140, function=3238389056, expires=996809, now=994309</span>
<span class="t " style="left:319px;top:501px;height:23px;line-height:23px;font-size:14.67px;color:#3c3c3c;letter-spacing:-0.251px;">2012-03-19 11:24:42.478 294 872</span>
<span class="t " style="left:540px;top:501px;height:23px;line-height:23px;font-size:14.67px;color:#3c3c3c;letter-spacing:-0.386px;">channel0_0</span>
<span class="t " style="left:622px;top:501px;height:23px;line-height:23px;font-size:14.67px;color:#3c3c3c;letter-spacing:-0.082px;">0</span>
<span class="t " style="left:674px;top:501px;height:23px;line-height:23px;font-size:14.67px;color:#3c3c3c;letter-spacing:0.221px;">sched_stat_runtime</span>
<span class="t " style="left:817px;top:501px;height:23px;line-height:23px;font-size:14.67px;color:#3c3c3c;letter-spacing:-0.159px;">4072</span>
<span class="t " style="left:869px;top:501px;height:23px;line-height:23px;font-size:14.67px;color:#3c3c3c;letter-spacing:-0.659px;">20</span>
<span class="t " style="left:921px;top:501px;height:23px;line-height:23px;font-size:14.67px;color:#3c3c3c;letter-spacing:0.141px;">comm=lttng-sessiond, tid=4072, runtime=201836, vruntime=476178495</span>
<span class="t " style="left:319px;top:524px;height:23px;line-height:23px;font-size:14.67px;color:#3c3c3c;letter-spacing:-0.251px;">2012-03-19 11:24:42.478 298 644</span>
<span class="t " style="left:540px;top:524px;height:23px;line-height:23px;font-size:14.67px;color:#3c3c3c;letter-spacing:-0.386px;">channel0_0</span>
<span class="t " style="left:622px;top:524px;height:23px;line-height:23px;font-size:14.67px;color:#3c3c3c;letter-spacing:-0.082px;">0</span>
<span class="t " style="left:674px;top:524px;height:23px;line-height:23px;font-size:14.67px;color:#3c3c3c;letter-spacing:0.028px;">sched_switch</span>
<span class="t " style="left:817px;top:524px;height:23px;line-height:23px;font-size:14.67px;color:#3c3c3c;letter-spacing:-0.082px;">0</span>
<span class="t " style="left:869px;top:524px;height:23px;line-height:23px;font-size:14.67px;color:#3c3c3c;letter-spacing:-0.659px;">20</span>
<span class="t " style="left:921px;top:524px;height:23px;line-height:23px;font-size:14.67px;color:#3c3c3c;letter-spacing:0.182px;">prev_comm=lttng-sessiond, prev_tid=4072, prev_prio=20, prev_state=1, next_comm=swapper, next_tid=0, next_prio=20</span>
<span class="t " style="left:319px;top:547px;height:23px;line-height:23px;font-size:14.67px;color:#3c3c3c;letter-spacing:-0.251px;">2012-03-19 11:24:42.478 369 463</span>
<span class="t " style="left:540px;top:547px;height:23px;line-height:23px;font-size:14.67px;color:#3c3c3c;letter-spacing:-0.386px;">channel0_1</span>
<span class="t " style="left:622px;top:547px;height:23px;line-height:23px;font-size:14.67px;color:#3c3c3c;letter-spacing:-0.082px;">1</span>
<span class="t " style="left:674px;top:547px;height:23px;line-height:23px;font-size:14.67px;color:#3c3c3c;letter-spacing:-0.228px;">sys_read</span>
<span class="t " style="left:817px;top:547px;height:23px;line-height:23px;font-size:14.67px;color:#3c3c3c;letter-spacing:-0.159px;">2718</span>
<span class="t " style="left:869px;top:547px;height:23px;line-height:23px;font-size:14.67px;color:#3c3c3c;letter-spacing:-0.659px;">20</span>
<span class="t " style="left:921px;top:547px;height:23px;line-height:23px;font-size:14.67px;color:#3c3c3c;letter-spacing:0.102px;">fd=3, buf=0x93cf2c8, count=4096</span>
<div class="vsep" style="left:312px;top:86px;height:478px;"></div>
<div class="vsep" style="left:533px;top:86px;height:478px;"></div>
<div class="vsep" style="left:615px;top:86px;height:478px;"></div>
<div class="vsep" style="left:667px;top:86px;height:478px;"></div>
<div class="vsep" style="left:810px;top:86px;height:478px;"></div>
<div class="vsep" style="left:862px;top:86px;height:478px;"></div>
<div class="vsep" style="left:914px;top:86px;height:478px;"></div>
</div></div>
<div class="hsep" style="left:312px;top:61px;height:24px;"></div>
<div class="hsep" style="left:533px;top:61px;height:24px;"></div>
<div class="hsep" style="left:615px;top:61px;height:24px;"></div>
<div class="hsep" style="left:667px;top:61px;height:24px;"></div>
<div class="hsep" style="left:810px;top:61px;height:24px;"></div>
<div class="hsep" style="left:862px;top:61px;height:24px;"></div>
<div class="hsep" style="left:914px;top:61px;height:24px;"></div>
<span class="t " style="left:319px;top:62px;height:24px;line-height:24px;font-size:14.67px;color:#3c3c3c;letter-spacing:0.222px;">Timestamp</span>
<span class="t " style="left:539px;top:62px;height:24px;line-height:24px;font-size:14.67px;color:#3c3c3c;letter-spacing:-0.235px;">Channel</span>
<span class="t " style="left:621px;top:62px;height:24px;line-height:24px;font-size:14.67px;color:#3c3c3c;letter-spacing:-0.991px;">CPU</span>
<span class="t " style="left:673px;top:62px;height:24px;line-height:24px;font-size:14.67px;color:#3c3c3c;letter-spacing:0.068px;">Event type</span>
<span class="t " style="left:816px;top:62px;height:24px;line-height:24px;font-size:14.67px;color:#3c3c3c;letter-spacing:-0.544px;">TID</span>
<span class="t " style="left:868px;top:62px;height:24px;line-height:24px;font-size:14.67px;color:#3c3c3c;letter-spacing:0.228px;">Prio</span>
<span class="t " style="left:920px;top:62px;height:24px;line-height:24px;font-size:14.67px;color:#3c3c3c;letter-spacing:0.161px;">Contents</span>
<svg style="left:0px;top:0px" width="320" height="110" viewBox="0 0 320 110">
<path d="M296.5 96.5 L291.3 103.3 L297.5 104.4 L300.5 101Z" fill="#fff3b0" stroke="#e9a21c" stroke-width="0.9" stroke-linejoin="round"/>
<path d="M300 92.5 L305.5 90 L307 91.5 L307 95 L301.5 101.5 L296 96.5Z" fill="#f6c766" stroke="#b87818" stroke-width="0.9" stroke-linejoin="round"/>
<path d="M297.8 94.6 L302.4 99.6 L300.2 102.6 L294.6 98Z" fill="#8a8896" stroke="#6d6b78" stroke-width="0.6"/>
<path d="M301.5 93.5 L305 91.5" stroke="#fff0c0" stroke-width="1.2"/>
<rect x="303.2" y="92.3" width="1.2" height="1.6" fill="#2b4fa0"/></svg>
<div class="" style="position:absolute;left:1846px;top:63px;width:13px;height:515px;border-radius:6.5px;background:#f7f7f6;border:1px solid #c6c3bf;box-sizing:border-box;"></div>
<div class="" style="position:absolute;left:1846px;top:77px;width:13px;height:487px;border-radius:6.5px;background:linear-gradient(90deg,#d0cecb,#dddbd8 45%,#e6e4e2);border:1px solid #bfbcb7;border-top:none;box-sizing:border-box;"></div>
<div class="" style="position:absolute;left:1846px;top:77px;width:13px;height:30px;border-radius:6.5px;background:linear-gradient(90deg,#ffffff,#f3f2f1 50%,#e4e2df);border:1px solid #b3aea8;box-sizing:border-box;"></div>
<div class="" style="position:absolute;left:1851px;top:88px;width:3px;height:1px;background:#bcb8b3;"></div>
<div class="" style="position:absolute;left:1851px;top:92px;width:3px;height:1px;background:#bcb8b3;"></div>
<div class="" style="position:absolute;left:1851px;top:94px;width:3px;height:1px;background:#bcb8b3;"></div>
<svg style="left:1850px;top:69px" width="5" height="3" viewBox="0 0 5 3"><path d="M0 3 L2.5 0 L5 3Z" fill="#5f5c58"/></svg>
<svg style="left:1850px;top:569px" width="5" height="3" viewBox="0 0 5 3"><path d="M0 0 L2.5 3 L5 0Z" fill="#5f5c58"/></svg>
<div class="" style="position:absolute;left:289px;top:567px;width:1555px;height:13px;border-radius:6.5px;background:#f7f7f6;border:1px solid #c6c3bf;box-sizing:border-box;"></div>
<div class="" style="position:absolute;left:302px;top:567px;width:1529px;height:13px;border-radius:6.5px;background:linear-gradient(#d0cecb,#dddbd8 45%,#e6e4e2);border:1px solid #bfbcb7;box-sizing:border-box;"></div>
<div class="" style="position:absolute;left:302px;top:567px;width:1496px;height:13px;border-radius:6.5px;background:linear-gradient(#ffffff,#f3f2f1 50%,#e4e2df);border:1px solid #b3aea8;box-sizing:border-box;"></div>
<div class="" style="position:absolute;left:1046px;top:572px;width:1px;height:3px;background:#bcb8b3;"></div>
<div class="" style="position:absolute;left:1050px;top:572px;width:1px;height:3px;background:#bcb8b3;"></div>
<div class="" style="position:absolute;left:1052px;top:572px;width:1px;height:3px;background:#bcb8b3;"></div>
<svg style="left:294px;top:571px" width="3" height="5" viewBox="0 0 3 5"><path d="M3 0 L0 2.5 L3 5Z" fill="#b5b2ae"/></svg>
<svg style="left:1836px;top:571px" width="3" height="5" viewBox="0 0 3 5"><path d="M0 0 L3 2.5 L0 5Z" fill="#5f5c58"/></svg>
<div class="panel" style="left:286px;top:587px;width:1578px;height:277px;"></div>
<div class="tab" style="left:286px;top:587px;width:113px;height:33px;"></div>
<svg style="left:293px;top:598px" width="14" height="12" viewBox="0 0 14 12">
<rect x="0.5" y="0.5" width="12.5" height="10" fill="#fff" stroke="#5a6585" stroke-width="1"/>
<rect x="1" y="1" width="11.5" height="1.6" fill="#98a3c2"/>
<path d="M1 4.5h11.5M1 6.5h11.5M1 8.5h11.5" stroke="#a7adc0" stroke-width="1"/><path d="M4.5 3v7.5" stroke="#c6cad6" stroke-width="1"/></svg>
<span class="t " style="left:311px;top:588px;height:34px;line-height:34px;font-size:14.67px;color:#000;letter-spacing:0.331px;">Statistics</span>
<svg style="left:380.5px;top:598.5px" width="11" height="11" viewBox="0 0 11 11"><path d="M0.7 2.6 L2.6 0.7 L5.5 3.6 L8.4 0.7 L10.3 2.6 L7.4 5.5 L10.3 8.4 L8.4 10.3 L5.5 7.4 L2.6 10.3 L0.7 8.4 L3.6 5.5Z" fill="#fff" stroke="#000" stroke-width="1.1" stroke-linejoin="miter"/></svg>
<svg style="left:1808px;top:599px" width="40" height="12"><rect x="0.5" y="0.5" width="9" height="3" fill="#fff" stroke="#000" stroke-width="1"/><rect x="28.5" y="0.5" width="9" height="9" fill="#fff" stroke="#000" stroke-width="1"/><rect x="29" y="2" width="8" height="1" fill="#222"/></svg>
<div class="" style="position:absolute;left:289px;top:622px;width:1572px;height:239px;border:1px solid #aeaaa5;border-radius:7px 7px 0 0;box-sizing:border-box;background:#fff;"></div>
<svg style="left:289px;top:622px" width="1572" height="23" viewBox="0 0 1572 23">
<path d="M92 0.5 C104 1 107 20 126 21.5 H1572" fill="none" stroke="#aeaaa5" stroke-width="1"/></svg>
<span class="t " style="left:293px;top:624px;height:21px;line-height:21px;font-size:14.67px;color:#000;letter-spacing:0.040px;">Global - kernel</span>
<div class="" style="position:absolute;left:1842px;top:646px;width:17px;height:212px;background:#f2f1f0;"></div>
<div class="" style="position:absolute;left:292px;top:646px;width:1550px;height:212px;border:1px solid #b9b5b0;box-sizing:border-box;background:#fff;"></div>
<div class="hdr" style="left:293px;top:647px;width:1548px;height:24px;"></div>
<div class="" style="position:absolute;left:293px;top:671px;width:1548px;height:1px;background:#b4b0ab;"></div>
<div class="hsep" style="left:492px;top:647px;height:24px;"></div>
<div class="hsep" style="left:632px;top:647px;height:24px;"></div>
<div class="hsep" style="left:772px;top:647px;height:24px;"></div>
<span class="t " style="left:298px;top:648px;height:24px;line-height:24px;font-size:14.67px;color:#3c3c3c;letter-spacing:-0.014px;">Level</span>
<span class="t " style="right:1238.72px;top:648px;height:24px;line-height:24px;font-size:14.67px;color:#3c3c3c;letter-spacing:0.279px;">Events total</span>
<span class="t " style="right:1098.96px;top:648px;height:24px;line-height:24px;font-size:14.67px;color:#3c3c3c;letter-spacing:0.036px;">Events in selection</span>
<div style="position:absolute;left:293px;top:672px;width:1548px;height:185px;overflow:hidden;"><div style="position:absolute;left:-293px;top:-672px;width:1867px;height:1176px;">
<svg style="left:329px;top:659px" width="15" height="15" viewBox="0 0 15 15">
<rect x="0.5" y="0.5" width="14" height="14" fill="#f1f8fe" stroke="#5f7096" stroke-width="1"/><rect x="0" y="0" width="15" height="3" fill="#4f8fd4"/><rect x="1" y="1.4" width="13" height="0.9" fill="#b5d9f6"/>
<circle cx="7.8" cy="6.1" r="1.7" fill="#78aee4" stroke="#3f72b4" stroke-width="0.8"/><circle cx="4.9" cy="10.9" r="1.7" fill="#78aee4" stroke="#3f72b4" stroke-width="0.8"/><circle cx="10.8" cy="10.9" r="1.7" fill="#78aee4" stroke="#3f72b4" stroke-width="0.8"/></svg>
<span class="t " style="left:348px;top:657px;height:23px;line-height:23px;font-size:14.67px;color:#3c3c3c;letter-spacing:0.166px;">exit_syscall</span>
<div class="" style="position:absolute;left:493px;top:656px;width:40px;height:23px;background:#f4f4ff;border-left:1px solid #b4b4f4;border-right:1px solid #b4b4f4;box-sizing:border-box;"></div>
<div class="" style="position:absolute;left:633px;top:656px;width:8px;height:23px;background:#f4f4ff;border-left:1px solid #b4b4f4;border-right:1px solid #b4b4f4;box-sizing:border-box;"></div>
<span class="t " style="left:499px;top:657px;height:23px;line-height:23px;font-size:14.67px;color:#8a8a8a;letter-spacing:-0.554px;">30.2 %</span>
<span class="t " style="right:1238.62px;top:657px;height:23px;line-height:23px;font-size:14.67px;color:#3c3c3c;letter-spacing:-0.125px;">210,440</span>
<span class="t " style="left:639px;top:657px;height:23px;line-height:23px;font-size:14.67px;color:#8a8a8a;letter-spacing:-0.648px;">5.8 %</span>
<span class="t " style="right:1098.58px;top:657px;height:23px;line-height:23px;font-size:14.67px;color:#3c3c3c;letter-spacing:-0.082px;">366</span>
<svg style="left:329px;top:682px" width="15" height="15" viewBox="0 0 15 15">
<rect x="0.5" y="0.5" width="14" height="14" fill="#f1f8fe" stroke="#5f7096" stroke-width="1"/><rect x="0" y="0" width="15" height="3" fill="#4f8fd4"/><rect x="1" y="1.4" width="13" height="0.9" fill="#b5d9f6"/>
<circle cx="7.8" cy="6.1" r="1.7" fill="#78aee4" stroke="#3f72b4" stroke-width="0.8"/><circle cx="4.9" cy="10.9" r="1.7" fill="#78aee4" stroke="#3f72b4" stroke-width="0.8"/><circle cx="10.8" cy="10.9" r="1.7" fill="#78aee4" stroke="#3f72b4" stroke-width="0.8"/></svg>
<span class="t " style="left:348px;top:680px;height:23px;line-height:23px;font-size:14.67px;color:#3c3c3c;letter-spacing:0.271px;">hrtimer_cancel</span>
<div class="" style="position:absolute;left:493px;top:679px;width:3px;height:23px;background:#f4f4ff;border-left:1px solid #b4b4f4;border-right:1px solid #b4b4f4;box-sizing:border-box;"></div>
<div class="" style="position:absolute;left:633px;top:679px;width:1px;height:23px;background:#c3c3f7;"></div>
<span class="t " style="left:499px;top:680px;height:23px;line-height:23px;font-size:14.67px;color:#8a8a8a;letter-spacing:-0.648px;">2.2 %</span>
<span class="t " style="right:1238.63px;top:680px;height:23px;line-height:23px;font-size:14.67px;color:#3c3c3c;letter-spacing:-0.132px;">15,342</span>
<span class="t " style="left:639px;top:680px;height:23px;line-height:23px;font-size:14.67px;color:#8a8a8a;letter-spacing:-0.648px;">0.3 %</span>
<span class="t " style="right:1098.58px;top:680px;height:23px;line-height:23px;font-size:14.67px;color:#3c3c3c;letter-spacing:-0.082px;">19</span>
<svg style="left:329px;top:705px" width="15" height="15" viewBox="0 0 15 15">
<rect x="0.5" y="0.5" width="14" height="14" fill="#f1f8fe" stroke="#5f7096" stroke-width="1"/><rect x="0" y="0" width="15" height="3" fill="#4f8fd4"/><rect x="1" y="1.4" width="13" height="0.9" fill="#b5d9f6"/>
<circle cx="7.8" cy="6.1" r="1.7" fill="#78aee4" stroke="#3f72b4" stroke-width="0.8"/><circle cx="4.9" cy="10.9" r="1.7" fill="#78aee4" stroke="#3f72b4" stroke-width="0.8"/><circle cx="10.8" cy="10.9" r="1.7" fill="#78aee4" stroke="#3f72b4" stroke-width="0.8"/></svg>
<span class="t " style="left:348px;top:703px;height:23px;line-height:23px;font-size:14.67px;color:#3c3c3c;letter-spacing:0.423px;">hrtimer_expire_entry</span>
<div class="" style="position:absolute;left:493px;top:702px;width:2px;height:23px;background:#bdbdf6;"></div>
<div class="" style="position:absolute;left:633px;top:702px;width:1px;height:23px;background:#c3c3f7;"></div>
<span class="t " style="left:499px;top:703px;height:23px;line-height:23px;font-size:14.67px;color:#8a8a8a;letter-spacing:-0.648px;">1.2 %</span>
<span class="t " style="right:1238.64px;top:703px;height:23px;line-height:23px;font-size:14.67px;color:#3c3c3c;letter-spacing:-0.142px;">8,952</span>
<span class="t " style="left:639px;top:703px;height:23px;line-height:23px;font-size:14.67px;color:#8a8a8a;letter-spacing:-0.648px;">0.2 %</span>
<span class="t " style="right:1098.58px;top:703px;height:23px;line-height:23px;font-size:14.67px;color:#3c3c3c;letter-spacing:-0.082px;">17</span>
<svg style="left:329px;top:728px" width="15" height="15" viewBox="0 0 15 15">
<rect x="0.5" y="0.5" width="14" height="14" fill="#f1f8fe" stroke="#5f7096" stroke-width="1"/><rect x="0" y="0" width="15" height="3" fill="#4f8fd4"/><rect x="1" y="1.4" width="13" height="0.9" fill="#b5d9f6"/>
<circle cx="7.8" cy="6.1" r="1.7" fill="#78aee4" stroke="#3f72b4" stroke-width="0.8"/><circle cx="4.9" cy="10.9" r="1.7" fill="#78aee4" stroke="#3f72b4" stroke-width="0.8"/><circle cx="10.8" cy="10.9" r="1.7" fill="#78aee4" stroke="#3f72b4" stroke-width="0.8"/></svg>
<span class="t " style="left:348px;top:726px;height:23px;line-height:23px;font-size:14.67px;color:#3c3c3c;letter-spacing:0.487px;">hrtimer_expire_exit</span>
<div class="" style="position:absolute;left:493px;top:725px;width:2px;height:23px;background:#bdbdf6;"></div>
<div class="" style="position:absolute;left:633px;top:725px;width:1px;height:23px;background:#c3c3f7;"></div>
<span class="t " style="left:499px;top:726px;height:23px;line-height:23px;font-size:14.67px;color:#8a8a8a;letter-spacing:-0.648px;">1.2 %</span>
<span class="t " style="right:1238.64px;top:726px;height:23px;line-height:23px;font-size:14.67px;color:#3c3c3c;letter-spacing:-0.142px;">8,952</span>
<span class="t " style="left:639px;top:726px;height:23px;line-height:23px;font-size:14.67px;color:#8a8a8a;letter-spacing:-0.648px;">0.2 %</span>
<span class="t " style="right:1098.58px;top:726px;height:23px;line-height:23px;font-size:14.67px;color:#3c3c3c;letter-spacing:-0.082px;">17</span>
<svg style="left:329px;top:751px" width="15" height="15" viewBox="0 0 15 15">
<rect x="0.5" y="0.5" width="14" height="14" fill="#f1f8fe" stroke="#5f7096" stroke-width="1"/><rect x="0" y="0" width="15" height="3" fill="#4f8fd4"/><rect x="1" y="1.4" width="13" height="0.9" fill="#b5d9f6"/>
<circle cx="7.8" cy="6.1" r="1.7" fill="#78aee4" stroke="#3f72b4" stroke-width="0.8"/><circle cx="4.9" cy="10.9" r="1.7" fill="#78aee4" stroke="#3f72b4" stroke-width="0.8"/><circle cx="10.8" cy="10.9" r="1.7" fill="#78aee4" stroke="#3f72b4" stroke-width="0.8"/></svg>
<span class="t " style="left:348px;top:749px;height:23px;line-height:23px;font-size:14.67px;color:#3c3c3c;letter-spacing:0.620px;">hrtimer_init</span>
<div class="" style="position:absolute;left:493px;top:748px;width:2px;height:23px;background:#bdbdf6;"></div>
<div class="" style="position:absolute;left:633px;top:748px;width:1px;height:23px;background:#c3c3f7;"></div>
<span class="t " style="left:499px;top:749px;height:23px;line-height:23px;font-size:14.67px;color:#8a8a8a;letter-spacing:-0.648px;">1.2 %</span>
<span class="t " style="right:1238.64px;top:749px;height:23px;line-height:23px;font-size:14.67px;color:#3c3c3c;letter-spacing:-0.142px;">8,575</span>
<span class="t " style="left:639px;top:749px;height:23px;line-height:23px;font-size:14.67px;color:#8a8a8a;letter-spacing:-0.648px;">0.1 %</span>
<span class="t " style="right:1098.58px;top:749px;height:23px;line-height:23px;font-size:14.67px;color:#3c3c3c;letter-spacing:-0.082px;">10</span>
<svg style="left:329px;top:774px" width="15" height="15" viewBox="0 0 15 15">
<rect x="0.5" y="0.5" width="14" height="14" fill="#f1f8fe" stroke="#5f7096" stroke-width="1"/><rect x="0" y="0" width="15" height="3" fill="#4f8fd4"/><rect x="1" y="1.4" width="13" height="0.9" fill="#b5d9f6"/>
<circle cx="7.8" cy="6.1" r="1.7" fill="#78aee4" stroke="#3f72b4" stroke-width="0.8"/><circle cx="4.9" cy="10.9" r="1.7" fill="#78aee4" stroke="#3f72b4" stroke-width="0.8"/><circle cx="10.8" cy="10.9" r="1.7" fill="#78aee4" stroke="#3f72b4" stroke-width="0.8"/></svg>
<span class="t " style="left:348px;top:772px;height:23px;line-height:23px;font-size:14.67px;color:#3c3c3c;letter-spacing:0.667px;">hrtimer_start</span>
<div class="" style="position:absolute;left:493px;top:771px;width:3px;height:23px;background:#f4f4ff;border-left:1px solid #b4b4f4;border-right:1px solid #b4b4f4;box-sizing:border-box;"></div>
<div class="" style="position:absolute;left:633px;top:771px;width:1px;height:23px;background:#c3c3f7;"></div>
<span class="t " style="left:499px;top:772px;height:23px;line-height:23px;font-size:14.67px;color:#8a8a8a;letter-spacing:-0.648px;">2.2 %</span>
<span class="t " style="right:1238.63px;top:772px;height:23px;line-height:23px;font-size:14.67px;color:#3c3c3c;letter-spacing:-0.132px;">15,346</span>
<span class="t " style="left:639px;top:772px;height:23px;line-height:23px;font-size:14.67px;color:#8a8a8a;letter-spacing:-0.648px;">0.3 %</span>
<span class="t " style="right:1098.58px;top:772px;height:23px;line-height:23px;font-size:14.67px;color:#3c3c3c;letter-spacing:-0.082px;">20</span>
<svg style="left:329px;top:797px" width="15" height="15" viewBox="0 0 15 15">
<rect x="0.5" y="0.5" width="14" height="14" fill="#f1f8fe" stroke="#5f7096" stroke-width="1"/><rect x="0" y="0" width="15" height="3" fill="#4f8fd4"/><rect x="1" y="1.4" width="13" height="0.9" fill="#b5d9f6"/>
<circle cx="7.8" cy="6.1" r="1.7" fill="#78aee4" stroke="#3f72b4" stroke-width="0.8"/><circle cx="4.9" cy="10.9" r="1.7" fill="#78aee4" stroke="#3f72b4" stroke-width="0.8"/><circle cx="10.8" cy="10.9" r="1.7" fill="#78aee4" stroke="#3f72b4" stroke-width="0.8"/></svg>
<span class="t " style="left:348px;top:795px;height:23px;line-height:23px;font-size:14.67px;color:#3c3c3c;letter-spacing:0.284px;">irq_handler_entry</span>
<div class="" style="position:absolute;left:493px;top:794px;width:1px;height:23px;background:#c3c3f7;"></div>
<div class="" style="position:absolute;left:633px;top:794px;width:1px;height:23px;background:#c3c3f7;"></div>
<span class="t " style="left:499px;top:795px;height:23px;line-height:23px;font-size:14.67px;color:#8a8a8a;letter-spacing:-0.925px;">1 %</span>
<span class="t " style="right:1238.64px;top:795px;height:23px;line-height:23px;font-size:14.67px;color:#3c3c3c;letter-spacing:-0.142px;">7,034</span>
<span class="t " style="left:639px;top:795px;height:23px;line-height:23px;font-size:14.67px;color:#8a8a8a;letter-spacing:-0.648px;">0.1 %</span>
<span class="t " style="right:1098.58px;top:795px;height:23px;line-height:23px;font-size:14.67px;color:#3c3c3c;letter-spacing:-0.082px;">10</span>
<svg style="left:329px;top:820px" width="15" height="15" viewBox="0 0 15 15">
<rect x="0.5" y="0.5" width="14" height="14" fill="#f1f8fe" stroke="#5f7096" stroke-width="1"/><rect x="0" y="0" width="15" height="3" fill="#4f8fd4"/><rect x="1" y="1.4" width="13" height="0.9" fill="#b5d9f6"/>
<circle cx="7.8" cy="6.1" r="1.7" fill="#78aee4" stroke="#3f72b4" stroke-width="0.8"/><circle cx="4.9" cy="10.9" r="1.7" fill="#78aee4" stroke="#3f72b4" stroke-width="0.8"/><circle cx="10.8" cy="10.9" r="1.7" fill="#78aee4" stroke="#3f72b4" stroke-width="0.8"/></svg>
<span class="t " style="left:348px;top:818px;height:23px;line-height:23px;font-size:14.67px;color:#3c3c3c;letter-spacing:0.351px;">irq_handler_exit</span>
<div class="" style="position:absolute;left:493px;top:817px;width:1px;height:23px;background:#c3c3f7;"></div>
<div class="" style="position:absolute;left:633px;top:817px;width:1px;height:23px;background:#c3c3f7;"></div>
<span class="t " style="left:499px;top:818px;height:23px;line-height:23px;font-size:14.67px;color:#8a8a8a;letter-spacing:-0.925px;">1 %</span>
<span class="t " style="right:1238.64px;top:818px;height:23px;line-height:23px;font-size:14.67px;color:#3c3c3c;letter-spacing:-0.142px;">7,034</span>
<span class="t " style="left:639px;top:818px;height:23px;line-height:23px;font-size:14.67px;color:#8a8a8a;letter-spacing:-0.648px;">0.1 %</span>
<span class="t " style="right:1098.58px;top:818px;height:23px;line-height:23px;font-size:14.67px;color:#3c3c3c;letter-spacing:-0.082px;">10</span>
<svg style="left:329px;top:843px" width="15" height="15" viewBox="0 0 15 15">
<rect x="0.5" y="0.5" width="14" height="14" fill="#f1f8fe" stroke="#5f7096" stroke-width="1"/><rect x="0" y="0" width="15" height="3" fill="#4f8fd4"/><rect x="1" y="1.4" width="13" height="0.9" fill="#b5d9f6"/>
<circle cx="7.8" cy="6.1" r="1.7" fill="#78aee4" stroke="#3f72b4" stroke-width="0.8"/><circle cx="4.9" cy="10.9" r="1.7" fill="#78aee4" stroke="#3f72b4" stroke-width="0.8"/><circle cx="10.8" cy="10.9" r="1.7" fill="#78aee4" stroke="#3f72b4" stroke-width="0.8"/></svg>
<span class="t " style="left:348px;top:841px;height:23px;line-height:23px;font-size:14.67px;color:#3c3c3c;letter-spacing:0.540px;">itimer_expire</span>
<div class="" style="position:absolute;left:493px;top:840px;width:1px;height:23px;background:#c3c3f7;"></div>
<div class="" style="position:absolute;left:633px;top:840px;width:1px;height:23px;background:#c3c3f7;"></div>
<span class="t " style="left:499px;top:841px;height:23px;line-height:23px;font-size:14.67px;color:#8a8a8a;letter-spacing:-0.925px;">0 %</span>
<span class="t " style="right:1238.58px;top:841px;height:23px;line-height:23px;font-size:14.67px;color:#3c3c3c;letter-spacing:-0.082px;">5</span>
<span class="t " style="left:639px;top:841px;height:23px;line-height:23px;font-size:14.67px;color:#8a8a8a;letter-spacing:-0.925px;">0 %</span>
<span class="t " style="right:1098.58px;top:841px;height:23px;line-height:23px;font-size:14.67px;color:#3c3c3c;letter-spacing:-0.082px;">0</span>
</div></div>
<div class="" style="position:absolute;left:1845px;top:646px;width:13px;height:211px;border-radius:6.5px;background:#f7f7f6;border:1px solid #c6c3bf;box-sizing:border-box;"></div>
<div class="" style="position:absolute;left:1845px;top:660px;width:13px;height:183px;border-radius:6.5px;background:linear-gradient(90deg,#d0cecb,#dddbd8 45%,#e6e4e2);border:1px solid #bfbcb7;border-top:none;box-sizing:border-box;"></div>
<div class="" style="position:absolute;left:1845px;top:675px;width:13px;height:30px;border-radius:6.5px;background:linear-gradient(90deg,#ffffff,#f3f2f1 50%,#e4e2df);border:1px solid #b3aea8;box-sizing:border-box;"></div>
<div class="" style="position:absolute;left:1850px;top:686px;width:3px;height:1px;background:#bcb8b3;"></div>
<div class="" style="position:absolute;left:1850px;top:690px;width:3px;height:1px;background:#bcb8b3;"></div>
<div class="" style="position:absolute;left:1850px;top:692px;width:3px;height:1px;background:#bcb8b3;"></div>
<svg style="left:1849px;top:652px" width="5" height="3" viewBox="0 0 5 3"><path d="M0 3 L2.5 0 L5 3Z" fill="#5f5c58"/></svg>
<svg style="left:1849px;top:848px" width="5" height="3" viewBox="0 0 5 3"><path d="M0 0 L2.5 3 L5 0Z" fill="#5f5c58"/></svg>
<div class="panel" style="left:286px;top:868px;width:1578px;height:275px;background:#fff;"></div>
<div class="" style="position:absolute;left:287px;top:869px;width:1576px;height:32px;background:linear-gradient(#dfdfdf,#dcdcdc);border-radius:5px 5px 0 0;"></div>
<div class="tab" style="left:286px;top:868px;width:120px;height:33px;background:#fff;"></div>
<svg style="left:292px;top:878px" width="16" height="16" viewBox="0 0 16 16" shape-rendering="crispEdges"><rect x="0.4" y="8" width="1" height="7" fill="#1d5a96"/><rect x="2.7" y="4" width="1" height="11" fill="#1d5a96"/><rect x="5.1" y="0" width="1" height="15" fill="#1d5a96"/><rect x="7.4" y="3" width="1" height="12" fill="#1d5a96"/><rect x="9.7" y="6" width="1" height="9" fill="#1d5a96"/><rect x="12.1" y="2" width="1" height="13" fill="#1d5a96"/><rect x="14.4" y="9" width="1" height="6" fill="#1d5a96"/></svg>
<span class="t " style="left:311px;top:870px;height:33px;line-height:33px;font-size:14.67px;color:#000;letter-spacing:0.350px;">Histogram</span>
<svg style="left:388.5px;top:879.5px" width="11" height="11" viewBox="0 0 11 11"><path d="M0.7 2.6 L2.6 0.7 L5.5 3.6 L8.4 0.7 L10.3 2.6 L7.4 5.5 L10.3 8.4 L8.4 10.3 L5.5 7.4 L2.6 10.3 L0.7 8.4 L3.6 5.5Z" fill="#fff" stroke="#000" stroke-width="1.1" stroke-linejoin="miter"/></svg>
<svg style="left:412px;top:879px" width="15" height="13" viewBox="0 0 15 13">
<rect x="0.5" y="0.5" width="13.5" height="11.5" fill="#ededed" stroke="#b9bcc4" stroke-width="1"/><rect x="1" y="1" width="12.5" height="2.2" fill="#c3c8d4"/><path d="M5 3v9M1 6h12.5M1 9h12.5" stroke="#cfd2d8" stroke-width="1"/></svg>
<span class="t " style="left:431px;top:870px;height:33px;line-height:33px;font-size:14.67px;color:#9a9a9a;letter-spacing:0.514px;">Properties</span>
<svg style="left:511px;top:877px" width="17" height="16" viewBox="0 0 17 16">
<path d="M1 2.5 C3 1.5 5.5 1.5 7.5 3 V14 C5.5 12.7 3 12.7 1 13.5Z" fill="#f3f5f8" stroke="#b8c3d3" stroke-width="1"/>
<path d="M7.5 3 C9 1.8 10 1.6 11 1.6 V12.8 C10 12.8 9 13 7.5 14Z" fill="#dfe6f0" stroke="#b8c3d3" stroke-width="1"/>
<path d="M11 1 H15 V15 L13 13 L11 15Z" fill="#9db4d3" stroke="#8aa3c5" stroke-width="0.8"/></svg>
<span class="t " style="left:532px;top:870px;height:33px;line-height:33px;font-size:14.67px;color:#9a9a9a;letter-spacing:0.403px;">Bookmarks</span>
<svg style="left:0;top:0" width="1867" height="900" viewBox="0 0 1867 900"><rect x="1720.6" y="888" width="1.3" height="4" fill="#e0708f"/><rect x="1723.8" y="884" width="1.3" height="8" fill="#e0708f"/><rect x="1727" y="880" width="1.3" height="12" fill="#e0708f"/><rect x="1730.2" y="879" width="1.3" height="13" fill="#e0708f"/><rect x="1733.4" y="885" width="1.3" height="7" fill="#e0708f"/><path d="M1720 877.2 L1736 892.8" stroke="#1c2f7a" stroke-width="1.5"/></svg>
<div class="" style="position:absolute;left:1743px;top:872px;width:26px;height:26px;border:1px solid #a8a39c;border-radius:4px;background:linear-gradient(#d9d6d1,#e9e7e4);box-sizing:border-box;"></div>
<svg style="left:0;top:0" width="1867" height="900" viewBox="0 0 1867 900"><rect x="1749.4" y="889" width="1.5" height="1.5" fill="#d8527a"/><rect x="1749.4" y="890.5" width="1.5" height="2.5" fill="#2fe02f"/><rect x="1752.9" y="879" width="1.5" height="1" fill="#d8527a"/><rect x="1752.9" y="880" width="1.5" height="8" fill="#8f8ff4"/><rect x="1752.9" y="888" width="1.5" height="5" fill="#2fe02f"/><rect x="1756.2" y="881.3" width="1.5" height="2.2" fill="#d8527a"/><rect x="1756.2" y="883.5" width="1.5" height="4.5" fill="#8f8ff4"/><rect x="1756.2" y="888.0" width="1.5" height="5.0" fill="#2fe02f"/><rect x="1759.5" y="879" width="1.5" height="6.5" fill="#d8527a"/><rect x="1759.5" y="885.5" width="1.5" height="2.5" fill="#8f8ff4"/><rect x="1759.5" y="888.0" width="1.5" height="5.0" fill="#2fe02f"/><rect x="1762.8" y="885.6" width="1.5" height="4.4" fill="#d8527a"/><rect x="1762.8" y="890.0" width="1.5" height="3.0" fill="#2fe02f"/></svg>
<svg style="left:1782px;top:879.3px" width="12" height="8" viewBox="0 0 12 8"><path d="M1 1.3 H10.6 L5.8 5.6Z" fill="#fff" stroke="#000" stroke-width="1"/></svg>
<svg style="left:1808px;top:880px" width="40" height="12"><rect x="0.5" y="0.5" width="9" height="3" fill="#fff" stroke="#000" stroke-width="1"/><rect x="28.5" y="0.5" width="9" height="9" fill="#fff" stroke="#000" stroke-width="1"/><rect x="29" y="2" width="8" height="1" fill="#222"/></svg>
<div class="" style="position:absolute;left:289px;top:903px;width:392px;height:119px;background:#f2f1f0;"></div>
<div class="" style="position:absolute;left:289px;top:919px;width:320px;height:59px;border:1px solid #c2beb9;box-sizing:border-box;"></div>
<div class="fld" style="left:388px;top:921px;width:219px;height:24px;"></div>
<div class="fld" style="left:388px;top:952px;width:219px;height:24px;"></div>
<div class="fld" style="left:494px;top:980px;width:114px;height:24px;"></div>
<span class="t " style="left:295px;top:922px;height:24px;line-height:24px;font-size:13.33px;color:#3c3c3c;letter-spacing:0.021px;">Selection Start</span>
<span class="t " style="left:300px;top:953px;height:24px;line-height:24px;font-size:13.33px;color:#3c3c3c;letter-spacing:-0.020px;">Selection End</span>
<span class="t " style="left:406px;top:981px;height:24px;line-height:24px;font-size:13.33px;color:#3c3c3c;letter-spacing:-0.113px;">Window Span</span>
<span class="t " style="left:392px;top:922px;height:24px;line-height:24px;font-size:13.33px;color:#2a2a2a;letter-spacing:0.238px;">2012-03-19 11:24:42.478 203 726</span>
<span class="t " style="left:392px;top:953px;height:24px;line-height:24px;font-size:13.33px;color:#2a2a2a;letter-spacing:0.238px;">2012-03-19 11:24:42.498 014 234</span>
<span class="t " style="left:499px;top:981px;height:24px;line-height:24px;font-size:13.33px;color:#2a2a2a;letter-spacing:0.195px;">000.100 000 000</span>
<svg style="left:0;top:0" width="700" height="1000" viewBox="0 0 700 1000">
<g transform="rotate(-40 622 948)"><ellipse cx="622" cy="948" rx="6.2" ry="3.6" fill="#f5c954" stroke="#b47a08" stroke-width="1.7"/>
<path d="M612.8 948h18.4" stroke="#b47a08" stroke-width="1.7"/><path d="M622 944.8v6.4" stroke="#c08a14" stroke-width="1.3"/>
<path d="M617 946.6h2.6M624.4 946.6h2.6M617 949.4h2.6M624.4 949.4h2.6" stroke="#fde08a" stroke-width="1.4"/>
<rect x="621.1" y="947.1" width="1.8" height="1.8" fill="#fff"/></g></svg>
<div class="" style="position:absolute;left:698px;top:908px;width:1163px;height:92px;border:1px solid #b9b5b0;box-sizing:border-box;background:#fff;"></div>
<div class="" style="position:absolute;left:1142px;top:909px;width:229px;height:90px;background:#f9f9f9;"></div>
<div class="" style="position:absolute;left:322px;top:1027px;width:1534px;height:63px;border:1px solid #b9b5b0;box-sizing:border-box;background:#fff;"></div>
<svg style="left:0;top:0" width="1867" height="1176" viewBox="0 0 1867 1176" shape-rendering="crispEdges"><path d="M699 999v-11h1v11zM700 999v-9h1v9zM701 999v-15h1v15zM702 999v-18h1v18zM703 999v-17h1v17zM704 999v-10h1v10zM705 999v-25h1v25zM706 999v-12h1v12zM707 999v-27h1v27zM708 999v-16h1v16zM710 999v-25h1v25zM711 999v-11h1v11zM712 999v-24h1v24zM713 999v-28h1v28zM714 999v-22h1v22zM715 999v-22h1v22zM716 999v-55h1v55zM717 999v-27h1v27zM718 999v-21h1v21zM719 999v-42h1v42zM720 999v-24h1v24zM721 999v-47h1v47zM722 999v-21h1v21zM723 999v-23h1v23zM724 999v-28h1v28zM732 999v-30h1v30zM733 999v-36h1v36zM734 999v-40h1v40zM735 999v-14h1v14zM758 999v-16h1v16zM759 999v-26h1v26zM761 999v-12h1v12zM762 999v-13h1v13zM763 999v-32h1v32zM764 999v-8h1v8zM765 999v-15h1v15zM766 999v-27h1v27zM767 999v-18h1v18zM768 999v-22h1v22zM772 999v-15h1v15zM773 999v-11h1v11zM774 999v-11h1v11zM775 999v-13h1v13zM784 999v-20h1v20zM785 999v-50h1v50zM786 999v-50h1v50zM807 999v-5h1v5zM808 999v-15h1v15zM809 999v-7h1v7zM810 999v-52h1v52zM811 999v-8h1v8zM812 999v-12h1v12zM813 999v-13h1v13zM851 999v-16h1v16zM852 999v-27h1v27zM854 999v-19h1v19zM855 999v-36h1v36zM856 999v-14h1v14zM857 999v-4h1v4zM858 999v-9h1v9zM900 999v-7h1v7zM902 999v-40h1v40zM903 999v-24h1v24zM904 999v-13h1v13zM905 999v-5h1v5zM906 999v-15h1v15zM907 999v-6h1v6zM908 999v-3h1v3zM917 999v-8h1v8zM918 999v-5h1v5zM922 999v-22h1v22zM923 999v-12h1v12zM924 999v-14h1v14zM925 999v-35h1v35zM926 999v-20h1v20zM927 999v-24h1v24zM928 999v-24h1v24zM946 999v-7h1v7zM948 999v-30h1v30zM949 999v-13h1v13zM950 999v-11h1v11zM951 999v-22h1v22zM952 999v-11h1v11zM953 999v-9h1v9zM960 999v-14h1v14zM961 999v-19h1v19zM962 999v-24h1v24zM963 999v-5h1v5zM964 999v-12h1v12zM966 999v-9h1v9zM967 999v-8h1v8zM968 999v-38h1v38zM969 999v-22h1v22zM970 999v-19h1v19zM991 999v-4h1v4zM992 999v-11h1v11zM994 999v-38h1v38zM995 999v-17h1v17zM996 999v-15h1v15zM997 999v-11h1v11zM998 999v-20h1v20zM999 999v-6h1v6zM1000 999v-4h1v4zM1042 999v-8h1v8zM1043 999v-27h1v27zM1044 999v-15h1v15zM1045 999v-8h1v8zM1046 999v-5h1v5zM1088 999v-21h1v21zM1089 999v-10h1v10zM1090 999v-14h1v14zM1091 999v-52h1v52zM1092 999v-50h1v50zM1093 999v-21h1v21zM1094 999v-20h1v20zM1106 999v-20h1v20zM1107 999v-8h1v8zM1108 999v-7h1v7zM1109 999v-8h1v8zM1110 999v-3h1v3zM1117 999v-9h1v9zM1118 999v-3h1v3zM1125 999v-5h1v5zM1126 999v-15h1v15zM1127 999v-7h1v7zM1133 999v-29h1v29zM1134 999v-27h1v27zM1135 999v-38h1v38zM1136 999v-29h1v29zM1137 999v-12h1v12zM1138 999v-18h1v18zM1139 999v-30h1v30zM1140 999v-23h1v23zM1141 999v-28h1v28z" fill="#5b5bfa"/><path d="M1155 999v-5h1v5zM1156 999v-13h1v13zM1157 999v-26h1v26zM1158 999v-9h1v9zM1159 999v-10h1v10zM1162 999v-7h1v7zM1163 999v-37h1v37zM1164 999v-14h1v14zM1165 999v-8h1v8zM1179 999v-6h1v6zM1181 999v-38h1v38zM1182 999v-6h1v6zM1183 999v-9h1v9zM1184 999v-9h1v9zM1189 999v-18h1v18zM1190 999v-3h1v3zM1191 999v-6h1v6zM1209 999v-3h1v3zM1210 999v-3h1v3zM1211 999v-30h1v30zM1212 999v-6h1v6zM1213 999v-11h1v11zM1226 999v-6h1v6zM1228 999v-55h1v55zM1229 999v-19h1v19zM1230 999v-20h1v20zM1231 999v-20h1v20zM1232 999v-11h1v11zM1233 999v-7h1v7zM1264 999v-1h1v1zM1265 999v-11h1v11zM1266 999v-5h1v5zM1274 999v-10h1v10zM1275 999v-25h1v25zM1276 999v-22h1v22zM1277 999v-18h1v18zM1278 999v-48h1v48zM1279 999v-30h1v30zM1280 999v-41h1v41zM1281 999v-44h1v44zM1282 999v-44h1v44zM1283 999v-42h1v42zM1284 999v-44h1v44zM1285 999v-41h1v41zM1286 999v-40h1v40zM1287 999v-42h1v42zM1288 999v-46h1v46zM1289 999v-44h1v44zM1290 999v-35h1v35zM1291 999v-40h1v40zM1292 999v-44h1v44zM1293 999v-44h1v44zM1294 999v-41h1v41zM1295 999v-43h1v43zM1296 999v-47h1v47zM1297 999v-44h1v44zM1298 999v-48h1v48zM1299 999v-47h1v47zM1300 999v-45h1v45zM1301 999v-36h1v36zM1302 999v-41h1v41zM1303 999v-42h1v42zM1304 999v-41h1v41zM1305 999v-47h1v47zM1306 999v-42h1v42zM1307 999v-42h1v42zM1308 999v-41h1v41zM1309 999v-42h1v42zM1310 999v-48h1v48zM1311 999v-42h1v42zM1312 999v-42h1v42zM1313 999v-40h1v40zM1314 999v-44h1v44zM1315 999v-42h1v42zM1316 999v-40h1v40zM1317 999v-41h1v41zM1318 999v-31h1v31zM1319 999v-42h1v42zM1320 999v-40h1v40zM1321 999v-46h1v46zM1322 999v-48h1v48zM1323 999v-66h1v66zM1324 999v-62h1v62zM1325 999v-31h1v31zM1326 999v-36h1v36zM1327 999v-49h1v49zM1328 999v-44h1v44zM1329 999v-64h1v64zM1330 999v-60h1v60zM1331 999v-49h1v49zM1332 999v-50h1v50zM1333 999v-40h1v40zM1334 999v-33h1v33zM1335 999v-51h1v51zM1336 999v-52h1v52zM1337 999v-36h1v36zM1338 999v-53h1v53zM1339 999v-52h1v52zM1340 999v-49h1v49zM1341 999v-42h1v42zM1342 999v-55h1v55zM1343 999v-55h1v55zM1344 999v-76h1v76zM1345 999v-70h1v70zM1346 999v-57h1v57zM1347 999v-49h1v49zM1348 999v-54h1v54zM1349 999v-54h1v54zM1350 999v-44h1v44zM1351 999v-77h1v77zM1352 999v-72h1v72zM1353 999v-58h1v58zM1354 999v-41h1v41zM1355 999v-56h1v56zM1356 999v-51h1v51zM1357 999v-62h1v62zM1358 999v-88h1v88zM1359 999v-80h1v80zM1360 999v-72h1v72zM1361 999v-58h1v58zM1362 999v-65h1v65zM1363 999v-64h1v64zM1364 999v-65h1v65zM1365 999v-60h1v60zM1366 999v-58h1v58zM1367 999v-74h1v74zM1368 999v-62h1v62zM1369 999v-63h1v63zM1370 999v-52h1v52z" fill="#9999f6"/><path d="M1371 999v-66h1v66zM1372 999v-63h1v63zM1373 999v-67h1v67zM1374 999v-63h1v63zM1375 999v-58h1v58zM1376 999v-66h1v66zM1377 999v-67h1v67zM1378 999v-62h1v62zM1379 999v-61h1v61zM1380 999v-67h1v67zM1381 999v-66h1v66zM1382 999v-66h1v66zM1383 999v-64h1v64zM1384 999v-60h1v60zM1385 999v-63h1v63zM1386 999v-65h1v65zM1387 999v-60h1v60zM1388 999v-61h1v61zM1389 999v-62h1v62zM1390 999v-65h1v65zM1391 999v-67h1v67zM1392 999v-68h1v68zM1393 999v-59h1v59zM1394 999v-61h1v61zM1395 999v-66h1v66zM1396 999v-66h1v66zM1397 999v-59h1v59zM1398 999v-61h1v61zM1399 999v-61h1v61zM1400 999v-62h1v62zM1401 999v-66h1v66zM1402 999v-63h1v63zM1403 999v-64h1v64zM1404 999v-58h1v58zM1405 999v-61h1v61zM1406 999v-64h1v64zM1407 999v-62h1v62zM1408 999v-62h1v62zM1409 999v-63h1v63zM1410 999v-66h1v66zM1411 999v-54h1v54zM1412 999v-66h1v66zM1413 999v-59h1v59zM1414 999v-66h1v66zM1415 999v-66h1v66zM1416 999v-58h1v58zM1417 999v-64h1v64zM1418 999v-67h1v67zM1419 999v-65h1v65zM1420 999v-63h1v63zM1421 999v-60h1v60zM1422 999v-62h1v62zM1423 999v-65h1v65zM1424 999v-61h1v61zM1425 999v-64h1v64zM1426 999v-55h1v55zM1427 999v-64h1v64zM1428 999v-62h1v62zM1429 999v-60h1v60zM1430 999v-63h1v63zM1431 999v-65h1v65zM1432 999v-63h1v63zM1433 999v-62h1v62zM1434 999v-65h1v65zM1435 999v-60h1v60zM1436 999v-65h1v65zM1437 999v-62h1v62zM1438 999v-66h1v66zM1439 999v-60h1v60zM1440 999v-63h1v63zM1441 999v-61h1v61zM1442 999v-65h1v65zM1443 999v-61h1v61zM1444 999v-62h1v62zM1445 999v-62h1v62zM1446 999v-65h1v65zM1447 999v-70h1v70zM1448 999v-88h1v88zM1449 999v-86h1v86zM1450 999v-62h1v62zM1451 999v-61h1v61zM1452 999v-58h1v58zM1453 999v-63h1v63zM1454 999v-72h1v72zM1455 999v-67h1v67zM1456 999v-55h1v55zM1457 999v-59h1v59zM1458 999v-63h1v63zM1459 999v-59h1v59zM1460 999v-62h1v62zM1461 999v-72h1v72zM1462 999v-70h1v70zM1463 999v-66h1v66zM1464 999v-58h1v58zM1465 999v-63h1v63zM1466 999v-61h1v61zM1467 999v-61h1v61zM1468 999v-66h1v66zM1469 999v-57h1v57zM1470 999v-66h1v66zM1471 999v-65h1v65zM1472 999v-62h1v62zM1473 999v-67h1v67zM1474 999v-62h1v62zM1475 999v-62h1v62zM1476 999v-60h1v60zM1477 999v-66h1v66zM1478 999v-62h1v62zM1479 999v-63h1v63zM1480 999v-67h1v67zM1481 999v-62h1v62zM1482 999v-63h1v63zM1483 999v-61h1v61zM1484 999v-65h1v65zM1485 999v-65h1v65zM1486 999v-62h1v62zM1487 999v-63h1v63zM1488 999v-54h1v54zM1489 999v-59h1v59zM1490 999v-64h1v64zM1491 999v-67h1v67zM1492 999v-67h1v67zM1493 999v-55h1v55zM1494 999v-65h1v65zM1495 999v-26h1v26zM1496 999v-45h1v45zM1497 999v-65h1v65zM1498 999v-57h1v57zM1499 999v-62h1v62zM1500 999v-63h1v63zM1501 999v-61h1v61zM1502 999v-54h1v54zM1503 999v-64h1v64zM1504 999v-63h1v63zM1505 999v-64h1v64zM1506 999v-66h1v66zM1507 999v-44h1v44zM1508 999v-66h1v66zM1509 999v-62h1v62zM1510 999v-53h1v53zM1511 999v-64h1v64zM1512 999v-63h1v63zM1513 999v-63h1v63zM1514 999v-65h1v65zM1515 999v-61h1v61zM1516 999v-64h1v64zM1517 999v-59h1v59zM1518 999v-62h1v62zM1519 999v-65h1v65zM1520 999v-60h1v60zM1521 999v-60h1v60zM1522 999v-61h1v61zM1523 999v-60h1v60zM1524 999v-63h1v63zM1525 999v-70h1v70zM1526 999v-65h1v65zM1527 999v-62h1v62zM1528 999v-67h1v67zM1529 999v-64h1v64zM1530 999v-63h1v63zM1531 999v-67h1v67zM1532 999v-61h1v61zM1533 999v-54h1v54zM1534 999v-63h1v63zM1535 999v-63h1v63zM1536 999v-60h1v60zM1537 999v-64h1v64zM1538 999v-70h1v70zM1539 999v-63h1v63zM1540 999v-61h1v61zM1541 999v-64h1v64zM1542 999v-61h1v61zM1543 999v-66h1v66zM1544 999v-54h1v54zM1545 999v-67h1v67zM1546 999v-60h1v60zM1547 999v-63h1v63zM1548 999v-64h1v64zM1549 999v-61h1v61zM1550 999v-62h1v62zM1551 999v-66h1v66zM1552 999v-61h1v61zM1553 999v-63h1v63zM1554 999v-58h1v58zM1555 999v-65h1v65zM1556 999v-60h1v60zM1557 999v-72h1v72zM1558 999v-76h1v76zM1559 999v-64h1v64zM1560 999v-70h1v70zM1561 999v-64h1v64zM1562 999v-65h1v65zM1563 999v-74h1v74zM1564 999v-63h1v63zM1565 999v-65h1v65zM1566 999v-58h1v58zM1567 999v-84h1v84zM1568 999v-80h1v80zM1569 999v-88h1v88zM1570 999v-88h1v88zM1571 999v-74h1v74zM1572 999v-60h1v60zM1573 999v-63h1v63zM1574 999v-61h1v61zM1575 999v-67h1v67zM1576 999v-58h1v58zM1577 999v-63h1v63zM1578 999v-59h1v59zM1579 999v-62h1v62zM1580 999v-72h1v72zM1581 999v-70h1v70zM1582 999v-61h1v61zM1583 999v-66h1v66zM1584 999v-62h1v62zM1585 999v-58h1v58zM1586 999v-61h1v61zM1587 999v-65h1v65zM1588 999v-61h1v61zM1589 999v-61h1v61zM1590 999v-64h1v64zM1591 999v-66h1v66zM1592 999v-64h1v64zM1593 999v-61h1v61zM1594 999v-64h1v64zM1595 999v-66h1v66zM1596 999v-67h1v67zM1597 999v-63h1v63zM1598 999v-56h1v56zM1599 999v-60h1v60zM1600 999v-62h1v62zM1601 999v-70h1v70zM1602 999v-65h1v65zM1603 999v-56h1v56zM1604 999v-64h1v64zM1605 999v-64h1v64zM1606 999v-61h1v61zM1607 999v-62h1v62zM1608 999v-58h1v58zM1609 999v-62h1v62zM1610 999v-64h1v64zM1611 999v-64h1v64zM1612 999v-61h1v61zM1613 999v-58h1v58zM1614 999v-64h1v64zM1615 999v-65h1v65zM1616 999v-56h1v56zM1617 999v-64h1v64zM1618 999v-65h1v65zM1619 999v-67h1v67zM1620 999v-62h1v62zM1621 999v-60h1v60zM1622 999v-63h1v63zM1623 999v-60h1v60zM1624 999v-60h1v60zM1625 999v-63h1v63zM1626 999v-64h1v64zM1627 999v-64h1v64zM1628 999v-61h1v61zM1629 999v-55h1v55zM1630 999v-65h1v65zM1631 999v-60h1v60zM1632 999v-65h1v65zM1633 999v-65h1v65zM1634 999v-57h1v57zM1635 999v-60h1v60zM1636 999v-65h1v65zM1637 999v-66h1v66zM1638 999v-62h1v62zM1639 999v-63h1v63zM1640 999v-64h1v64zM1641 999v-64h1v64zM1642 999v-62h1v62zM1643 999v-60h1v60zM1644 999v-62h1v62zM1645 999v-67h1v67zM1646 999v-70h1v70zM1647 999v-62h1v62zM1648 999v-66h1v66zM1649 999v-65h1v65zM1650 999v-67h1v67zM1651 999v-66h1v66zM1652 999v-66h1v66zM1653 999v-65h1v65zM1654 999v-62h1v62zM1655 999v-57h1v57zM1656 999v-57h1v57zM1657 999v-67h1v67zM1658 999v-58h1v58zM1659 999v-65h1v65zM1660 999v-65h1v65zM1661 999v-60h1v60zM1662 999v-63h1v63zM1663 999v-66h1v66zM1664 999v-60h1v60zM1665 999v-66h1v66zM1666 999v-61h1v61zM1667 999v-54h1v54zM1668 999v-66h1v66zM1669 999v-66h1v66zM1670 999v-59h1v59zM1671 999v-65h1v65zM1672 999v-62h1v62zM1673 999v-60h1v60zM1674 999v-62h1v62zM1675 999v-63h1v63zM1676 999v-67h1v67zM1677 999v-66h1v66zM1678 999v-60h1v60zM1679 999v-63h1v63zM1680 999v-62h1v62zM1681 999v-64h1v64zM1682 999v-59h1v59zM1683 999v-57h1v57zM1684 999v-65h1v65zM1685 999v-60h1v60zM1686 999v-63h1v63zM1687 999v-80h1v80zM1688 999v-62h1v62zM1689 999v-86h1v86zM1690 999v-60h1v60zM1691 999v-48h1v48zM1692 999v-88h1v88zM1693 999v-80h1v80zM1694 999v-8h1v8zM1700 999v-32h1v32zM1707 999v-16h1v16zM1708 999v-6h1v6zM1718 999v-3h1v3zM1731 999v-4h1v4zM1739 999v-61h1v61zM1740 999v-20h1v20zM1741 999v-12h1v12zM1744 999v-8h1v8zM1757 999v-35h1v35zM1758 999v-10h1v10zM1760 999v-8h1v8zM1762 999v-10h1v10zM1764 999v-29h1v29zM1770 999v-37h1v37zM1774 999v-20h1v20zM1779 999v-5h1v5zM1782 999v-29h1v29zM1786 999v-26h1v26zM1810 999v-36h1v36zM1811 999v-15h1v15zM1814 999v-12h1v12zM1832 999v-40h1v40zM1833 999v-8h1v8zM1854 999v-20h1v20zM1855 999v-8h1v8z" fill="#5b5bfa"/><rect x="1141" y="909" width="1" height="90" fill="#8d8df5"/><rect x="1371" y="909" width="1" height="90" fill="#5b5bfa"/><path d="M322 1089v-3h1v3zM323 1089v-3h1v3zM324 1089v-2h1v2zM325 1089v-4h1v4zM326 1089v-3h1v3zM327 1089v-5h1v5zM328 1089v-6h1v6z" fill="#5b5bfa"/><path d="M329 1089v-61h1v61zM330 1089v-40h1v40zM331 1089v-61h1v61z" fill="#a9a0e4"/><path d="M332 1089v-61h1v61zM333 1089v-58h1v58zM334 1089v-52h1v52zM335 1089v-44h1v44zM336 1089v-8h1v8zM337 1089v-5h1v5zM338 1089v-4h1v4zM339 1089v-2h1v2zM340 1089v-8h1v8zM341 1089v-4h1v4zM342 1089v-2h1v2zM343 1089v-2h1v2zM344 1089v-3h1v3zM345 1089v-3h1v3zM346 1089v-7h1v7zM347 1089v-2h1v2zM348 1089v-3h1v3zM349 1089v-5h1v5zM350 1089v-3h1v3zM351 1089v-2h1v2zM352 1089v-3h1v3zM353 1089v-7h1v7zM354 1089v-19h1v19zM355 1089v-39h1v39zM356 1089v-24h1v24zM357 1089v-11h1v11zM358 1089v-25h1v25zM359 1089v-13h1v13zM360 1089v-25h1v25zM361 1089v-12h1v12zM362 1089v-7h1v7zM363 1089v-4h1v4zM364 1089v-3h1v3zM365 1089v-3h1v3zM366 1089v-5h1v5zM367 1089v-2h1v2zM368 1089v-3h1v3zM369 1089v-2h1v2zM370 1089v-3h1v3zM371 1089v-3h1v3zM372 1089v-3h1v3zM373 1089v-5h1v5zM374 1089v-4h1v4zM375 1089v-2h1v2zM376 1089v-4h1v4zM377 1089v-2h1v2zM378 1089v-4h1v4zM379 1089v-4h1v4zM380 1089v-3h1v3zM381 1089v-2h1v2zM382 1089v-4h1v4zM383 1089v-4h1v4zM384 1089v-4h1v4zM385 1089v-2h1v2zM386 1089v-4h1v4zM387 1089v-2h1v2zM388 1089v-4h1v4zM389 1089v-2h1v2zM390 1089v-2h1v2zM391 1089v-2h1v2zM392 1089v-2h1v2zM393 1089v-3h1v3zM394 1089v-2h1v2zM395 1089v-4h1v4zM396 1089v-6h1v6zM397 1089v-3h1v3zM398 1089v-2h1v2zM399 1089v-4h1v4zM400 1089v-4h1v4zM401 1089v-3h1v3zM402 1089v-4h1v4zM403 1089v-5h1v5zM404 1089v-3h1v3zM405 1089v-4h1v4zM406 1089v-4h1v4zM407 1089v-4h1v4zM408 1089v-4h1v4zM409 1089v-4h1v4zM410 1089v-4h1v4zM411 1089v-3h1v3zM412 1089v-3h1v3zM413 1089v-3h1v3zM414 1089v-3h1v3zM415 1089v-7h1v7zM416 1089v-3h1v3zM417 1089v-3h1v3zM418 1089v-4h1v4zM419 1089v-4h1v4zM420 1089v-3h1v3zM421 1089v-2h1v2zM422 1089v-3h1v3zM423 1089v-4h1v4zM424 1089v-2h1v2zM425 1089v-4h1v4zM426 1089v-2h1v2zM427 1089v-4h1v4zM428 1089v-4h1v4zM429 1089v-4h1v4zM430 1089v-3h1v3zM431 1089v-4h1v4zM432 1089v-3h1v3zM433 1089v-2h1v2zM434 1089v-3h1v3zM435 1089v-4h1v4zM436 1089v-11h1v11zM437 1089v-12h1v12zM438 1089v-35h1v35zM439 1089v-20h1v20zM440 1089v-12h1v12zM441 1089v-4h1v4zM442 1089v-5h1v5zM443 1089v-2h1v2zM444 1089v-2h1v2zM445 1089v-3h1v3zM446 1089v-4h1v4zM447 1089v-2h1v2zM448 1089v-2h1v2zM449 1089v-2h1v2zM450 1089v-2h1v2zM451 1089v-3h1v3zM452 1089v-4h1v4zM453 1089v-4h1v4zM454 1089v-2h1v2zM455 1089v-2h1v2zM456 1089v-3h1v3zM457 1089v-2h1v2zM458 1089v-3h1v3zM459 1089v-3h1v3zM460 1089v-4h1v4zM461 1089v-4h1v4zM462 1089v-2h1v2zM463 1089v-7h1v7zM464 1089v-3h1v3zM465 1089v-4h1v4zM466 1089v-3h1v3zM467 1089v-4h1v4zM468 1089v-5h1v5zM469 1089v-2h1v2zM470 1089v-4h1v4zM471 1089v-4h1v4zM472 1089v-4h1v4zM473 1089v-8h1v8zM474 1089v-4h1v4zM475 1089v-4h1v4zM476 1089v-3h1v3zM477 1089v-3h1v3zM478 1089v-4h1v4zM479 1089v-2h1v2zM480 1089v-2h1v2zM481 1089v-2h1v2zM482 1089v-4h1v4zM483 1089v-2h1v2zM484 1089v-4h1v4zM485 1089v-4h1v4zM486 1089v-5h1v5zM487 1089v-3h1v3zM488 1089v-3h1v3zM489 1089v-4h1v4zM490 1089v-3h1v3zM491 1089v-3h1v3zM492 1089v-3h1v3zM493 1089v-4h1v4zM494 1089v-4h1v4zM495 1089v-6h1v6zM496 1089v-2h1v2zM497 1089v-3h1v3zM498 1089v-2h1v2zM499 1089v-6h1v6zM500 1089v-4h1v4zM501 1089v-3h1v3zM502 1089v-2h1v2zM503 1089v-3h1v3zM504 1089v-8h1v8zM505 1089v-18h1v18zM506 1089v-32h1v32zM507 1089v-18h1v18zM508 1089v-11h1v11zM509 1089v-10h1v10zM510 1089v-25h1v25zM511 1089v-9h1v9zM512 1089v-7h1v7zM513 1089v-18h1v18zM514 1089v-11h1v11zM515 1089v-4h1v4zM516 1089v-6h1v6zM517 1089v-15h1v15zM518 1089v-8h1v8zM519 1089v-3h1v3zM520 1089v-2h1v2zM521 1089v-3h1v3zM522 1089v-6h1v6zM523 1089v-18h1v18zM524 1089v-7h1v7zM525 1089v-13h1v13zM526 1089v-22h1v22zM527 1089v-8h1v8zM528 1089v-13h1v13zM529 1089v-32h1v32zM530 1089v-13h1v13zM531 1089v-2h1v2zM532 1089v-5h1v5zM533 1089v-12h1v12zM534 1089v-5h1v5zM535 1089v-4h1v4zM536 1089v-4h1v4zM537 1089v-4h1v4zM538 1089v-4h1v4zM539 1089v-5h1v5zM540 1089v-12h1v12zM541 1089v-4h1v4zM542 1089v-3h1v3zM543 1089v-2h1v2zM544 1089v-2h1v2zM545 1089v-13h1v13zM546 1089v-25h1v25zM547 1089v-13h1v13zM548 1089v-12h1v12zM549 1089v-6h1v6zM550 1089v-3h1v3zM551 1089v-2h1v2zM552 1089v-4h1v4zM553 1089v-3h1v3zM554 1089v-3h1v3zM555 1089v-2h1v2zM556 1089v-2h1v2zM557 1089v-4h1v4zM558 1089v-4h1v4zM559 1089v-3h1v3zM560 1089v-5h1v5zM561 1089v-8h1v8zM562 1089v-4h1v4zM563 1089v-4h1v4zM564 1089v-3h1v3zM565 1089v-4h1v4zM566 1089v-7h1v7zM567 1089v-3h1v3zM568 1089v-2h1v2zM569 1089v-3h1v3zM570 1089v-3h1v3zM571 1089v-3h1v3zM572 1089v-4h1v4zM573 1089v-3h1v3zM574 1089v-3h1v3zM575 1089v-3h1v3zM576 1089v-6h1v6zM577 1089v-4h1v4zM578 1089v-3h1v3zM579 1089v-4h1v4zM580 1089v-3h1v3zM581 1089v-2h1v2zM582 1089v-2h1v2zM583 1089v-4h1v4zM584 1089v-3h1v3zM585 1089v-6h1v6zM586 1089v-6h1v6zM587 1089v-2h1v2zM588 1089v-4h1v4zM589 1089v-4h1v4zM590 1089v-3h1v3zM591 1089v-3h1v3zM592 1089v-2h1v2zM593 1089v-5h1v5zM594 1089v-3h1v3zM595 1089v-2h1v2zM596 1089v-3h1v3zM597 1089v-4h1v4zM598 1089v-2h1v2zM599 1089v-2h1v2zM600 1089v-10h1v10zM601 1089v-23h1v23zM602 1089v-10h1v10zM603 1089v-8h1v8zM604 1089v-4h1v4zM605 1089v-3h1v3zM606 1089v-4h1v4zM607 1089v-4h1v4zM608 1089v-3h1v3zM609 1089v-7h1v7zM610 1089v-2h1v2zM611 1089v-3h1v3zM612 1089v-2h1v2zM613 1089v-2h1v2zM614 1089v-4h1v4zM615 1089v-2h1v2zM616 1089v-3h1v3zM617 1089v-3h1v3zM618 1089v-8h1v8zM619 1089v-2h1v2zM620 1089v-4h1v4zM621 1089v-3h1v3zM622 1089v-2h1v2zM623 1089v-3h1v3zM624 1089v-3h1v3zM625 1089v-2h1v2zM626 1089v-5h1v5zM627 1089v-4h1v4zM628 1089v-2h1v2zM629 1089v-3h1v3zM630 1089v-2h1v2zM631 1089v-2h1v2zM632 1089v-4h1v4zM633 1089v-3h1v3zM634 1089v-3h1v3zM635 1089v-3h1v3zM636 1089v-4h1v4zM637 1089v-2h1v2zM638 1089v-3h1v3zM639 1089v-2h1v2zM640 1089v-2h1v2zM641 1089v-3h1v3zM642 1089v-5h1v5zM643 1089v-3h1v3zM644 1089v-4h1v4zM645 1089v-3h1v3zM646 1089v-4h1v4zM647 1089v-2h1v2zM648 1089v-3h1v3zM649 1089v-2h1v2zM650 1089v-2h1v2zM651 1089v-4h1v4zM652 1089v-2h1v2zM653 1089v-4h1v4zM654 1089v-2h1v2zM655 1089v-13h1v13zM656 1089v-27h1v27zM657 1089v-14h1v14zM658 1089v-5h1v5zM659 1089v-3h1v3zM660 1089v-2h1v2zM661 1089v-3h1v3zM662 1089v-7h1v7zM663 1089v-3h1v3zM664 1089v-3h1v3zM665 1089v-3h1v3zM666 1089v-3h1v3zM667 1089v-3h1v3zM668 1089v-3h1v3zM669 1089v-4h1v4zM670 1089v-2h1v2zM671 1089v-3h1v3zM672 1089v-3h1v3zM673 1089v-6h1v6zM674 1089v-2h1v2zM675 1089v-4h1v4zM676 1089v-2h1v2zM677 1089v-4h1v4zM678 1089v-3h1v3zM679 1089v-4h1v4zM680 1089v-2h1v2zM681 1089v-4h1v4zM682 1089v-4h1v4zM683 1089v-3h1v3zM684 1089v-6h1v6zM685 1089v-3h1v3zM686 1089v-4h1v4zM687 1089v-3h1v3zM688 1089v-4h1v4zM689 1089v-4h1v4zM690 1089v-4h1v4zM691 1089v-6h1v6zM692 1089v-4h1v4zM693 1089v-3h1v3zM694 1089v-2h1v2zM695 1089v-5h1v5zM696 1089v-2h1v2zM697 1089v-3h1v3zM698 1089v-5h1v5zM699 1089v-2h1v2zM700 1089v-4h1v4zM701 1089v-2h1v2zM702 1089v-3h1v3zM703 1089v-4h1v4zM704 1089v-2h1v2zM705 1089v-2h1v2zM706 1089v-4h1v4zM707 1089v-2h1v2zM708 1089v-2h1v2zM709 1089v-4h1v4zM710 1089v-3h1v3zM711 1089v-3h1v3zM712 1089v-4h1v4zM713 1089v-3h1v3zM714 1089v-4h1v4zM715 1089v-2h1v2zM716 1089v-4h1v4zM717 1089v-3h1v3zM718 1089v-3h1v3zM719 1089v-5h1v5zM720 1089v-2h1v2zM721 1089v-3h1v3zM722 1089v-4h1v4zM723 1089v-3h1v3zM724 1089v-2h1v2zM725 1089v-2h1v2zM726 1089v-3h1v3zM727 1089v-5h1v5zM728 1089v-3h1v3zM729 1089v-4h1v4zM730 1089v-4h1v4zM731 1089v-4h1v4zM732 1089v-2h1v2zM733 1089v-2h1v2zM734 1089v-3h1v3zM735 1089v-6h1v6zM736 1089v-2h1v2zM737 1089v-3h1v3zM738 1089v-2h1v2zM739 1089v-23h1v23zM740 1089v-3h1v3zM741 1089v-4h1v4zM742 1089v-2h1v2zM743 1089v-2h1v2zM744 1089v-4h1v4zM745 1089v-4h1v4zM746 1089v-3h1v3zM747 1089v-4h1v4zM748 1089v-4h1v4zM749 1089v-3h1v3zM750 1089v-2h1v2zM751 1089v-30h1v30zM752 1089v-8h1v8zM753 1089v-4h1v4zM754 1089v-6h1v6zM755 1089v-15h1v15zM756 1089v-8h1v8zM757 1089v-4h1v4zM758 1089v-2h1v2zM759 1089v-3h1v3zM760 1089v-6h1v6zM761 1089v-3h1v3zM762 1089v-2h1v2zM763 1089v-2h1v2zM764 1089v-4h1v4zM765 1089v-3h1v3zM766 1089v-3h1v3zM767 1089v-2h1v2zM768 1089v-2h1v2zM769 1089v-2h1v2zM770 1089v-3h1v3zM771 1089v-4h1v4zM772 1089v-4h1v4zM773 1089v-3h1v3zM774 1089v-2h1v2zM775 1089v-4h1v4zM776 1089v-7h1v7zM777 1089v-3h1v3zM778 1089v-3h1v3zM779 1089v-4h1v4zM780 1089v-3h1v3zM781 1089v-4h1v4zM782 1089v-3h1v3zM783 1089v-4h1v4zM784 1089v-3h1v3zM785 1089v-3h1v3zM786 1089v-4h1v4zM787 1089v-6h1v6zM788 1089v-4h1v4zM789 1089v-4h1v4zM790 1089v-2h1v2zM791 1089v-2h1v2zM792 1089v-4h1v4zM793 1089v-4h1v4zM794 1089v-3h1v3zM795 1089v-5h1v5zM796 1089v-4h1v4zM797 1089v-3h1v3zM798 1089v-2h1v2zM799 1089v-5h1v5zM800 1089v-3h1v3zM801 1089v-4h1v4zM802 1089v-4h1v4zM803 1089v-3h1v3zM804 1089v-2h1v2zM805 1089v-16h1v16zM806 1089v-33h1v33zM807 1089v-18h1v18zM808 1089v-7h1v7zM809 1089v-4h1v4zM810 1089v-3h1v3zM811 1089v-2h1v2zM812 1089v-3h1v3zM813 1089v-3h1v3zM814 1089v-2h1v2zM815 1089v-2h1v2zM816 1089v-3h1v3zM817 1089v-2h1v2zM818 1089v-2h1v2zM819 1089v-6h1v6zM820 1089v-3h1v3zM821 1089v-4h1v4zM822 1089v-4h1v4zM823 1089v-5h1v5zM824 1089v-4h1v4zM825 1089v-3h1v3zM826 1089v-4h1v4zM827 1089v-3h1v3zM828 1089v-4h1v4zM829 1089v-2h1v2zM830 1089v-4h1v4zM831 1089v-3h1v3zM832 1089v-2h1v2zM833 1089v-2h1v2zM834 1089v-3h1v3zM835 1089v-3h1v3zM836 1089v-4h1v4zM837 1089v-2h1v2zM838 1089v-4h1v4zM839 1089v-8h1v8zM840 1089v-4h1v4zM841 1089v-4h1v4zM842 1089v-4h1v4zM843 1089v-4h1v4zM844 1089v-4h1v4zM845 1089v-4h1v4zM846 1089v-3h1v3zM847 1089v-3h1v3zM848 1089v-2h1v2zM849 1089v-2h1v2zM850 1089v-4h1v4zM851 1089v-3h1v3zM852 1089v-2h1v2zM853 1089v-4h1v4zM854 1089v-3h1v3zM855 1089v-8h1v8zM856 1089v-2h1v2zM857 1089v-4h1v4zM858 1089v-2h1v2zM859 1089v-3h1v3zM860 1089v-2h1v2zM861 1089v-5h1v5zM862 1089v-3h1v3zM863 1089v-4h1v4zM864 1089v-2h1v2zM865 1089v-2h1v2zM866 1089v-4h1v4zM867 1089v-2h1v2zM868 1089v-7h1v7zM869 1089v-15h1v15zM870 1089v-11h1v11zM871 1089v-24h1v24zM872 1089v-10h1v10zM873 1089v-5h1v5zM874 1089v-4h1v4zM875 1089v-3h1v3zM876 1089v-2h1v2zM877 1089v-4h1v4zM878 1089v-3h1v3zM879 1089v-5h1v5zM880 1089v-3h1v3zM881 1089v-2h1v2zM882 1089v-2h1v2zM883 1089v-4h1v4zM884 1089v-2h1v2zM885 1089v-2h1v2zM886 1089v-3h1v3zM887 1089v-4h1v4zM888 1089v-15h1v15zM889 1089v-4h1v4zM890 1089v-4h1v4zM891 1089v-2h1v2zM892 1089v-3h1v3zM893 1089v-4h1v4zM894 1089v-3h1v3zM895 1089v-4h1v4zM896 1089v-3h1v3zM897 1089v-4h1v4zM898 1089v-2h1v2zM899 1089v-2h1v2zM900 1089v-25h1v25zM901 1089v-8h1v8zM902 1089v-5h1v5zM903 1089v-3h1v3zM904 1089v-15h1v15zM905 1089v-4h1v4zM906 1089v-4h1v4zM907 1089v-2h1v2zM908 1089v-3h1v3zM909 1089v-3h1v3zM910 1089v-4h1v4zM911 1089v-4h1v4zM912 1089v-3h1v3zM913 1089v-2h1v2zM914 1089v-2h1v2zM915 1089v-2h1v2zM916 1089v-3h1v3zM917 1089v-3h1v3zM918 1089v-4h1v4zM919 1089v-2h1v2zM920 1089v-4h1v4zM921 1089v-4h1v4zM922 1089v-3h1v3zM923 1089v-2h1v2zM924 1089v-3h1v3zM925 1089v-4h1v4zM926 1089v-4h1v4zM927 1089v-4h1v4zM928 1089v-2h1v2zM929 1089v-2h1v2zM930 1089v-2h1v2zM931 1089v-2h1v2zM932 1089v-5h1v5zM933 1089v-4h1v4zM934 1089v-2h1v2zM935 1089v-2h1v2zM936 1089v-4h1v4zM937 1089v-3h1v3zM938 1089v-6h1v6zM939 1089v-3h1v3zM940 1089v-2h1v2zM941 1089v-4h1v4zM942 1089v-3h1v3zM943 1089v-3h1v3zM944 1089v-4h1v4zM945 1089v-4h1v4zM946 1089v-3h1v3zM947 1089v-3h1v3zM948 1089v-2h1v2zM949 1089v-3h1v3zM950 1089v-3h1v3zM951 1089v-6h1v6zM952 1089v-2h1v2zM953 1089v-2h1v2zM954 1089v-13h1v13zM955 1089v-30h1v30zM956 1089v-18h1v18zM957 1089v-7h1v7zM958 1089v-2h1v2zM959 1089v-4h1v4zM960 1089v-12h1v12zM961 1089v-7h1v7zM962 1089v-2h1v2zM963 1089v-3h1v3zM964 1089v-4h1v4zM965 1089v-4h1v4zM966 1089v-2h1v2zM967 1089v-2h1v2zM968 1089v-2h1v2zM969 1089v-2h1v2zM970 1089v-3h1v3zM971 1089v-2h1v2zM972 1089v-2h1v2zM973 1089v-4h1v4zM974 1089v-2h1v2zM975 1089v-4h1v4zM976 1089v-3h1v3zM977 1089v-2h1v2zM978 1089v-3h1v3zM979 1089v-2h1v2zM980 1089v-3h1v3zM981 1089v-4h1v4zM982 1089v-4h1v4zM983 1089v-4h1v4zM984 1089v-4h1v4zM985 1089v-4h1v4zM986 1089v-2h1v2zM987 1089v-2h1v2zM988 1089v-3h1v3zM989 1089v-3h1v3zM990 1089v-3h1v3zM991 1089v-2h1v2zM992 1089v-3h1v3zM993 1089v-4h1v4zM994 1089v-2h1v2zM995 1089v-3h1v3zM996 1089v-3h1v3zM997 1089v-3h1v3zM998 1089v-2h1v2zM999 1089v-3h1v3zM1000 1089v-3h1v3zM1001 1089v-3h1v3zM1002 1089v-3h1v3zM1003 1089v-2h1v2zM1004 1089v-3h1v3zM1005 1089v-3h1v3zM1006 1089v-4h1v4zM1007 1089v-3h1v3zM1008 1089v-4h1v4zM1009 1089v-3h1v3zM1010 1089v-7h1v7zM1011 1089v-3h1v3zM1012 1089v-3h1v3zM1013 1089v-4h1v4zM1014 1089v-3h1v3zM1015 1089v-2h1v2zM1016 1089v-3h1v3zM1017 1089v-3h1v3zM1018 1089v-4h1v4zM1019 1089v-2h1v2zM1020 1089v-2h1v2zM1021 1089v-3h1v3zM1022 1089v-2h1v2zM1023 1089v-4h1v4zM1024 1089v-3h1v3zM1025 1089v-4h1v4zM1026 1089v-5h1v5zM1027 1089v-4h1v4zM1028 1089v-4h1v4zM1029 1089v-4h1v4zM1030 1089v-7h1v7zM1031 1089v-3h1v3zM1032 1089v-3h1v3zM1033 1089v-2h1v2zM1034 1089v-3h1v3zM1035 1089v-2h1v2zM1036 1089v-2h1v2zM1037 1089v-2h1v2zM1038 1089v-18h1v18zM1039 1089v-6h1v6zM1040 1089v-3h1v3zM1041 1089v-3h1v3zM1042 1089v-4h1v4zM1043 1089v-2h1v2zM1044 1089v-3h1v3zM1045 1089v-3h1v3zM1046 1089v-2h1v2zM1047 1089v-3h1v3zM1048 1089v-4h1v4zM1049 1089v-4h1v4zM1050 1089v-20h1v20zM1051 1089v-8h1v8zM1052 1089v-4h1v4zM1053 1089v-4h1v4zM1054 1089v-10h1v10zM1055 1089v-3h1v3zM1056 1089v-4h1v4zM1057 1089v-4h1v4zM1058 1089v-3h1v3zM1059 1089v-3h1v3zM1060 1089v-8h1v8zM1061 1089v-4h1v4zM1062 1089v-2h1v2zM1063 1089v-4h1v4zM1064 1089v-4h1v4zM1065 1089v-2h1v2zM1066 1089v-3h1v3zM1067 1089v-2h1v2zM1068 1089v-4h1v4zM1069 1089v-3h1v3zM1070 1089v-4h1v4zM1071 1089v-5h1v5zM1072 1089v-3h1v3zM1073 1089v-2h1v2zM1074 1089v-2h1v2zM1075 1089v-4h1v4zM1076 1089v-2h1v2zM1077 1089v-8h1v8zM1078 1089v-20h1v20zM1079 1089v-9h1v9zM1080 1089v-22h1v22zM1081 1089v-12h1v12zM1082 1089v-25h1v25zM1083 1089v-11h1v11zM1084 1089v-27h1v27zM1085 1089v-12h1v12zM1086 1089v-4h1v4zM1087 1089v-3h1v3zM1088 1089v-3h1v3zM1089 1089v-3h1v3zM1090 1089v-3h1v3zM1091 1089v-4h1v4zM1092 1089v-5h1v5zM1093 1089v-4h1v4zM1094 1089v-2h1v2zM1095 1089v-2h1v2zM1096 1089v-2h1v2zM1097 1089v-4h1v4zM1098 1089v-3h1v3zM1099 1089v-22h1v22zM1100 1089v-8h1v8zM1101 1089v-5h1v5zM1102 1089v-4h1v4zM1103 1089v-4h1v4zM1104 1089v-6h1v6zM1105 1089v-18h1v18zM1106 1089v-30h1v30zM1107 1089v-10h1v10zM1108 1089v-5h1v5zM1109 1089v-2h1v2zM1110 1089v-3h1v3zM1111 1089v-4h1v4zM1112 1089v-3h1v3zM1113 1089v-3h1v3zM1114 1089v-3h1v3zM1115 1089v-8h1v8zM1116 1089v-3h1v3zM1117 1089v-3h1v3zM1118 1089v-2h1v2zM1119 1089v-2h1v2zM1120 1089v-3h1v3zM1121 1089v-3h1v3zM1122 1089v-2h1v2zM1123 1089v-4h1v4zM1124 1089v-4h1v4zM1125 1089v-4h1v4zM1126 1089v-5h1v5zM1127 1089v-4h1v4zM1128 1089v-3h1v3zM1129 1089v-2h1v2zM1130 1089v-4h1v4zM1131 1089v-5h1v5zM1132 1089v-3h1v3zM1133 1089v-4h1v4zM1134 1089v-3h1v3zM1135 1089v-2h1v2zM1136 1089v-4h1v4zM1137 1089v-3h1v3zM1138 1089v-3h1v3zM1139 1089v-4h1v4zM1140 1089v-3h1v3zM1141 1089v-3h1v3zM1142 1089v-2h1v2zM1143 1089v-3h1v3zM1144 1089v-2h1v2zM1145 1089v-3h1v3zM1146 1089v-3h1v3zM1147 1089v-4h1v4zM1148 1089v-5h1v5zM1149 1089v-2h1v2zM1150 1089v-5h1v5zM1151 1089v-4h1v4zM1152 1089v-5h1v5zM1153 1089v-2h1v2zM1154 1089v-4h1v4zM1155 1089v-7h1v7zM1156 1089v-3h1v3zM1157 1089v-3h1v3zM1158 1089v-4h1v4zM1159 1089v-4h1v4zM1160 1089v-3h1v3zM1161 1089v-2h1v2zM1162 1089v-3h1v3zM1163 1089v-3h1v3zM1164 1089v-3h1v3zM1165 1089v-4h1v4zM1166 1089v-4h1v4zM1167 1089v-4h1v4zM1168 1089v-2h1v2zM1169 1089v-2h1v2zM1170 1089v-3h1v3zM1171 1089v-4h1v4zM1172 1089v-2h1v2zM1173 1089v-4h1v4zM1174 1089v-4h1v4zM1175 1089v-5h1v5zM1176 1089v-3h1v3zM1177 1089v-4h1v4zM1178 1089v-4h1v4zM1179 1089v-2h1v2zM1180 1089v-2h1v2zM1181 1089v-2h1v2zM1182 1089v-4h1v4zM1183 1089v-2h1v2zM1184 1089v-3h1v3zM1185 1089v-2h1v2zM1186 1089v-6h1v6zM1187 1089v-2h1v2zM1188 1089v-6h1v6zM1189 1089v-3h1v3zM1190 1089v-3h1v3zM1191 1089v-3h1v3zM1192 1089v-4h1v4zM1193 1089v-3h1v3zM1194 1089v-4h1v4zM1195 1089v-4h1v4zM1196 1089v-3h1v3zM1197 1089v-4h1v4zM1198 1089v-4h1v4zM1199 1089v-3h1v3zM1200 1089v-8h1v8zM1201 1089v-20h1v20zM1202 1089v-14h1v14zM1203 1089v-8h1v8zM1204 1089v-4h1v4zM1205 1089v-5h1v5zM1206 1089v-10h1v10zM1207 1089v-4h1v4zM1208 1089v-2h1v2zM1209 1089v-6h1v6zM1210 1089v-10h1v10zM1211 1089v-5h1v5zM1212 1089v-9h1v9zM1213 1089v-5h1v5zM1214 1089v-4h1v4zM1215 1089v-3h1v3zM1216 1089v-4h1v4zM1217 1089v-3h1v3zM1218 1089v-3h1v3zM1219 1089v-2h1v2zM1220 1089v-3h1v3zM1221 1089v-8h1v8zM1222 1089v-5h1v5zM1223 1089v-4h1v4zM1224 1089v-5h1v5zM1225 1089v-3h1v3zM1226 1089v-4h1v4zM1227 1089v-5h1v5zM1228 1089v-3h1v3zM1229 1089v-4h1v4zM1230 1089v-12h1v12zM1231 1089v-6h1v6zM1232 1089v-4h1v4zM1233 1089v-4h1v4zM1234 1089v-4h1v4zM1235 1089v-3h1v3zM1236 1089v-4h1v4zM1237 1089v-7h1v7zM1238 1089v-3h1v3zM1239 1089v-3h1v3zM1240 1089v-4h1v4zM1241 1089v-3h1v3zM1242 1089v-4h1v4zM1243 1089v-10h1v10zM1244 1089v-5h1v5zM1245 1089v-2h1v2zM1246 1089v-2h1v2zM1247 1089v-3h1v3zM1248 1089v-3h1v3zM1249 1089v-2h1v2zM1250 1089v-2h1v2zM1251 1089v-6h1v6zM1252 1089v-3h1v3zM1253 1089v-11h1v11zM1254 1089v-30h1v30zM1255 1089v-34h1v34zM1256 1089v-12h1v12zM1257 1089v-4h1v4zM1258 1089v-3h1v3zM1259 1089v-4h1v4zM1260 1089v-4h1v4zM1261 1089v-3h1v3zM1262 1089v-2h1v2zM1263 1089v-4h1v4zM1264 1089v-3h1v3zM1265 1089v-4h1v4zM1266 1089v-6h1v6zM1267 1089v-4h1v4zM1268 1089v-2h1v2zM1269 1089v-2h1v2zM1270 1089v-3h1v3zM1271 1089v-3h1v3zM1272 1089v-3h1v3zM1273 1089v-4h1v4zM1274 1089v-3h1v3zM1275 1089v-3h1v3zM1276 1089v-2h1v2zM1277 1089v-2h1v2zM1278 1089v-2h1v2zM1279 1089v-3h1v3zM1280 1089v-3h1v3zM1281 1089v-3h1v3zM1282 1089v-4h1v4zM1283 1089v-3h1v3zM1284 1089v-2h1v2zM1285 1089v-3h1v3zM1286 1089v-3h1v3zM1287 1089v-4h1v4zM1288 1089v-13h1v13zM1289 1089v-2h1v2zM1290 1089v-3h1v3zM1291 1089v-3h1v3zM1292 1089v-4h1v4zM1293 1089v-5h1v5zM1294 1089v-3h1v3zM1295 1089v-4h1v4zM1296 1089v-3h1v3zM1297 1089v-4h1v4zM1298 1089v-3h1v3zM1299 1089v-4h1v4zM1300 1089v-2h1v2zM1301 1089v-7h1v7zM1302 1089v-2h1v2zM1303 1089v-3h1v3zM1304 1089v-5h1v5zM1305 1089v-2h1v2zM1306 1089v-3h1v3zM1307 1089v-3h1v3zM1308 1089v-3h1v3zM1309 1089v-2h1v2zM1310 1089v-2h1v2zM1311 1089v-4h1v4zM1312 1089v-3h1v3zM1313 1089v-2h1v2zM1314 1089v-4h1v4zM1315 1089v-4h1v4zM1316 1089v-3h1v3zM1317 1089v-4h1v4zM1318 1089v-4h1v4zM1319 1089v-2h1v2zM1320 1089v-3h1v3zM1321 1089v-4h1v4zM1322 1089v-4h1v4zM1323 1089v-4h1v4zM1324 1089v-4h1v4zM1325 1089v-3h1v3zM1326 1089v-3h1v3zM1327 1089v-3h1v3zM1328 1089v-3h1v3zM1329 1089v-3h1v3zM1330 1089v-3h1v3zM1331 1089v-3h1v3zM1332 1089v-5h1v5zM1333 1089v-2h1v2zM1334 1089v-4h1v4zM1335 1089v-2h1v2zM1336 1089v-4h1v4zM1337 1089v-4h1v4zM1338 1089v-30h1v30zM1339 1089v-5h1v5zM1340 1089v-3h1v3zM1341 1089v-2h1v2zM1342 1089v-2h1v2zM1343 1089v-4h1v4zM1344 1089v-4h1v4zM1345 1089v-3h1v3zM1346 1089v-2h1v2zM1347 1089v-7h1v7zM1348 1089v-2h1v2zM1349 1089v-2h1v2zM1350 1089v-25h1v25zM1351 1089v-12h1v12zM1352 1089v-6h1v6zM1353 1089v-4h1v4zM1354 1089v-6h1v6zM1355 1089v-12h1v12zM1356 1089v-5h1v5zM1357 1089v-2h1v2zM1358 1089v-3h1v3zM1359 1089v-5h1v5zM1360 1089v-12h1v12zM1361 1089v-7h1v7zM1362 1089v-3h1v3zM1363 1089v-3h1v3zM1364 1089v-2h1v2zM1365 1089v-4h1v4zM1366 1089v-3h1v3zM1367 1089v-3h1v3zM1368 1089v-4h1v4zM1369 1089v-2h1v2zM1370 1089v-18h1v18zM1371 1089v-5h1v5zM1372 1089v-8h1v8zM1373 1089v-4h1v4zM1374 1089v-6h1v6zM1375 1089v-3h1v3zM1376 1089v-4h1v4zM1377 1089v-4h1v4zM1378 1089v-3h1v3zM1379 1089v-5h1v5zM1380 1089v-9h1v9zM1381 1089v-5h1v5zM1382 1089v-3h1v3zM1383 1089v-2h1v2zM1384 1089v-3h1v3zM1385 1089v-6h1v6zM1386 1089v-13h1v13zM1387 1089v-6h1v6zM1388 1089v-2h1v2zM1389 1089v-3h1v3zM1390 1089v-2h1v2zM1391 1089v-3h1v3zM1392 1089v-2h1v2zM1393 1089v-3h1v3zM1394 1089v-6h1v6zM1395 1089v-2h1v2zM1396 1089v-4h1v4zM1397 1089v-8h1v8zM1398 1089v-8h1v8zM1399 1089v-4h1v4zM1400 1089v-3h1v3zM1401 1089v-4h1v4zM1402 1089v-3h1v3zM1403 1089v-3h1v3zM1404 1089v-28h1v28zM1405 1089v-28h1v28zM1406 1089v-8h1v8zM1407 1089v-3h1v3zM1408 1089v-4h1v4zM1409 1089v-3h1v3zM1410 1089v-4h1v4zM1411 1089v-2h1v2zM1412 1089v-5h1v5zM1413 1089v-3h1v3zM1414 1089v-3h1v3zM1415 1089v-4h1v4zM1416 1089v-3h1v3zM1417 1089v-3h1v3zM1418 1089v-3h1v3zM1419 1089v-4h1v4zM1420 1089v-2h1v2zM1421 1089v-3h1v3zM1422 1089v-3h1v3zM1423 1089v-4h1v4zM1424 1089v-3h1v3zM1425 1089v-4h1v4zM1426 1089v-2h1v2zM1427 1089v-3h1v3zM1428 1089v-4h1v4zM1429 1089v-3h1v3zM1430 1089v-4h1v4zM1431 1089v-2h1v2zM1432 1089v-5h1v5zM1433 1089v-3h1v3zM1434 1089v-5h1v5zM1435 1089v-2h1v2zM1436 1089v-4h1v4zM1437 1089v-4h1v4zM1438 1089v-2h1v2zM1439 1089v-4h1v4zM1440 1089v-4h1v4zM1441 1089v-3h1v3zM1442 1089v-2h1v2zM1443 1089v-2h1v2zM1444 1089v-4h1v4zM1445 1089v-8h1v8zM1446 1089v-4h1v4zM1447 1089v-4h1v4zM1448 1089v-4h1v4zM1449 1089v-4h1v4zM1450 1089v-4h1v4zM1451 1089v-5h1v5zM1452 1089v-2h1v2zM1453 1089v-4h1v4zM1454 1089v-2h1v2zM1455 1089v-2h1v2zM1456 1089v-2h1v2zM1457 1089v-3h1v3zM1458 1089v-3h1v3zM1459 1089v-3h1v3zM1460 1089v-3h1v3zM1461 1089v-2h1v2zM1462 1089v-4h1v4zM1463 1089v-3h1v3zM1464 1089v-3h1v3zM1465 1089v-2h1v2zM1466 1089v-5h1v5zM1467 1089v-3h1v3zM1468 1089v-3h1v3zM1469 1089v-4h1v4zM1470 1089v-3h1v3zM1471 1089v-3h1v3zM1472 1089v-2h1v2zM1473 1089v-4h1v4zM1474 1089v-2h1v2zM1475 1089v-4h1v4zM1476 1089v-4h1v4zM1477 1089v-2h1v2zM1478 1089v-2h1v2zM1479 1089v-2h1v2zM1480 1089v-3h1v3zM1481 1089v-3h1v3zM1482 1089v-3h1v3zM1483 1089v-3h1v3zM1484 1089v-3h1v3zM1485 1089v-3h1v3zM1486 1089v-2h1v2zM1487 1089v-7h1v7zM1488 1089v-2h1v2zM1489 1089v-5h1v5zM1490 1089v-2h1v2zM1491 1089v-2h1v2zM1492 1089v-2h1v2zM1493 1089v-4h1v4zM1494 1089v-4h1v4zM1495 1089v-3h1v3zM1496 1089v-4h1v4zM1497 1089v-3h1v3zM1498 1089v-3h1v3zM1499 1089v-3h1v3zM1500 1089v-27h1v27zM1501 1089v-8h1v8zM1502 1089v-3h1v3zM1503 1089v-4h1v4zM1504 1089v-2h1v2zM1505 1089v-2h1v2zM1506 1089v-4h1v4zM1507 1089v-4h1v4zM1508 1089v-3h1v3zM1509 1089v-4h1v4zM1510 1089v-7h1v7zM1511 1089v-4h1v4zM1512 1089v-3h1v3zM1513 1089v-2h1v2zM1514 1089v-4h1v4zM1515 1089v-8h1v8zM1516 1089v-4h1v4zM1517 1089v-4h1v4zM1518 1089v-2h1v2zM1519 1089v-2h1v2zM1520 1089v-7h1v7zM1521 1089v-3h1v3zM1522 1089v-4h1v4zM1523 1089v-4h1v4zM1524 1089v-6h1v6zM1525 1089v-4h1v4zM1526 1089v-5h1v5zM1527 1089v-2h1v2zM1528 1089v-4h1v4zM1529 1089v-5h1v5zM1530 1089v-2h1v2zM1531 1089v-2h1v2zM1532 1089v-4h1v4zM1533 1089v-6h1v6zM1534 1089v-12h1v12zM1535 1089v-4h1v4zM1536 1089v-3h1v3zM1537 1089v-2h1v2zM1538 1089v-2h1v2zM1539 1089v-4h1v4zM1540 1089v-8h1v8zM1541 1089v-4h1v4zM1542 1089v-4h1v4zM1543 1089v-4h1v4zM1544 1089v-4h1v4zM1545 1089v-2h1v2zM1546 1089v-6h1v6zM1547 1089v-7h1v7zM1548 1089v-2h1v2zM1549 1089v-10h1v10zM1550 1089v-20h1v20zM1551 1089v-9h1v9zM1552 1089v-6h1v6zM1553 1089v-16h1v16zM1554 1089v-6h1v6zM1555 1089v-30h1v30zM1556 1089v-14h1v14zM1557 1089v-7h1v7zM1558 1089v-5h1v5zM1559 1089v-3h1v3zM1560 1089v-4h1v4zM1561 1089v-4h1v4zM1562 1089v-3h1v3zM1563 1089v-4h1v4zM1564 1089v-2h1v2zM1565 1089v-5h1v5zM1566 1089v-2h1v2zM1567 1089v-2h1v2zM1568 1089v-3h1v3zM1569 1089v-4h1v4zM1570 1089v-2h1v2zM1571 1089v-4h1v4zM1572 1089v-3h1v3zM1573 1089v-2h1v2zM1574 1089v-4h1v4zM1575 1089v-2h1v2zM1576 1089v-2h1v2zM1577 1089v-3h1v3zM1578 1089v-3h1v3zM1579 1089v-4h1v4zM1580 1089v-4h1v4zM1581 1089v-3h1v3zM1582 1089v-4h1v4zM1583 1089v-2h1v2zM1584 1089v-2h1v2zM1585 1089v-3h1v3zM1586 1089v-2h1v2zM1587 1089v-7h1v7zM1588 1089v-3h1v3zM1589 1089v-5h1v5zM1590 1089v-2h1v2zM1591 1089v-4h1v4zM1592 1089v-3h1v3zM1593 1089v-4h1v4zM1594 1089v-4h1v4zM1595 1089v-3h1v3zM1596 1089v-3h1v3zM1597 1089v-2h1v2zM1598 1089v-3h1v3zM1599 1089v-4h1v4zM1600 1089v-3h1v3zM1601 1089v-3h1v3zM1602 1089v-4h1v4zM1603 1089v-7h1v7zM1604 1089v-4h1v4zM1605 1089v-2h1v2zM1606 1089v-4h1v4zM1607 1089v-4h1v4zM1608 1089v-4h1v4zM1609 1089v-4h1v4zM1610 1089v-5h1v5zM1611 1089v-4h1v4zM1612 1089v-3h1v3zM1613 1089v-2h1v2zM1614 1089v-2h1v2zM1615 1089v-5h1v5zM1616 1089v-4h1v4zM1617 1089v-3h1v3zM1618 1089v-4h1v4zM1619 1089v-3h1v3zM1620 1089v-4h1v4zM1621 1089v-3h1v3zM1622 1089v-4h1v4zM1623 1089v-3h1v3zM1624 1089v-4h1v4zM1625 1089v-3h1v3zM1626 1089v-4h1v4zM1627 1089v-3h1v3zM1628 1089v-3h1v3zM1629 1089v-3h1v3zM1630 1089v-4h1v4zM1631 1089v-4h1v4zM1632 1089v-2h1v2zM1633 1089v-3h1v3zM1634 1089v-5h1v5zM1635 1089v-4h1v4zM1636 1089v-4h1v4zM1637 1089v-2h1v2zM1638 1089v-28h1v28zM1639 1089v-3h1v3zM1640 1089v-3h1v3zM1641 1089v-2h1v2zM1642 1089v-4h1v4zM1643 1089v-2h1v2zM1644 1089v-4h1v4zM1645 1089v-2h1v2zM1646 1089v-2h1v2zM1647 1089v-4h1v4zM1648 1089v-3h1v3zM1649 1089v-2h1v2zM1650 1089v-27h1v27zM1651 1089v-6h1v6zM1652 1089v-3h1v3zM1653 1089v-2h1v2zM1654 1089v-2h1v2zM1655 1089v-4h1v4zM1656 1089v-3h1v3zM1657 1089v-4h1v4zM1658 1089v-3h1v3zM1659 1089v-4h1v4zM1660 1089v-3h1v3zM1661 1089v-4h1v4zM1662 1089v-4h1v4zM1663 1089v-3h1v3zM1664 1089v-2h1v2zM1665 1089v-4h1v4zM1666 1089v-3h1v3zM1667 1089v-4h1v4zM1668 1089v-4h1v4zM1669 1089v-4h1v4zM1670 1089v-3h1v3zM1671 1089v-2h1v2zM1672 1089v-5h1v5zM1673 1089v-4h1v4zM1674 1089v-2h1v2zM1675 1089v-4h1v4zM1676 1089v-2h1v2zM1677 1089v-4h1v4zM1678 1089v-3h1v3zM1679 1089v-3h1v3zM1680 1089v-3h1v3zM1681 1089v-2h1v2zM1682 1089v-2h1v2zM1683 1089v-3h1v3zM1684 1089v-2h1v2zM1685 1089v-3h1v3zM1686 1089v-2h1v2zM1687 1089v-4h1v4zM1688 1089v-4h1v4zM1689 1089v-4h1v4zM1690 1089v-7h1v7zM1691 1089v-3h1v3zM1692 1089v-3h1v3zM1693 1089v-4h1v4zM1694 1089v-2h1v2zM1695 1089v-2h1v2zM1696 1089v-5h1v5zM1697 1089v-9h1v9zM1698 1089v-5h1v5zM1699 1089v-4h1v4zM1700 1089v-8h1v8zM1701 1089v-15h1v15zM1702 1089v-7h1v7zM1703 1089v-13h1v13zM1704 1089v-22h1v22zM1705 1089v-11h1v11zM1706 1089v-18h1v18zM1707 1089v-11h1v11zM1708 1089v-5h1v5zM1709 1089v-12h1v12zM1710 1089v-5h1v5zM1711 1089v-3h1v3zM1712 1089v-4h1v4zM1713 1089v-4h1v4zM1714 1089v-9h1v9zM1715 1089v-3h1v3zM1716 1089v-4h1v4zM1717 1089v-3h1v3zM1718 1089v-3h1v3zM1719 1089v-3h1v3zM1720 1089v-8h1v8zM1721 1089v-3h1v3zM1722 1089v-4h1v4zM1723 1089v-4h1v4zM1724 1089v-2h1v2zM1725 1089v-2h1v2zM1726 1089v-4h1v4zM1727 1089v-2h1v2zM1728 1089v-4h1v4zM1729 1089v-2h1v2zM1730 1089v-2h1v2zM1731 1089v-4h1v4zM1732 1089v-2h1v2zM1733 1089v-2h1v2zM1734 1089v-3h1v3zM1735 1089v-3h1v3zM1736 1089v-3h1v3zM1737 1089v-2h1v2zM1738 1089v-2h1v2zM1739 1089v-5h1v5zM1740 1089v-2h1v2zM1741 1089v-4h1v4zM1742 1089v-2h1v2zM1743 1089v-2h1v2zM1744 1089v-4h1v4zM1745 1089v-6h1v6zM1746 1089v-3h1v3zM1747 1089v-3h1v3zM1748 1089v-3h1v3zM1749 1089v-3h1v3zM1750 1089v-2h1v2zM1751 1089v-5h1v5zM1752 1089v-2h1v2zM1753 1089v-4h1v4zM1754 1089v-3h1v3zM1755 1089v-4h1v4zM1756 1089v-2h1v2zM1757 1089v-4h1v4zM1758 1089v-4h1v4zM1759 1089v-2h1v2zM1760 1089v-4h1v4zM1761 1089v-4h1v4zM1762 1089v-4h1v4zM1763 1089v-4h1v4zM1764 1089v-2h1v2zM1765 1089v-2h1v2zM1766 1089v-3h1v3zM1767 1089v-2h1v2zM1768 1089v-3h1v3zM1769 1089v-2h1v2zM1770 1089v-2h1v2zM1771 1089v-2h1v2zM1772 1089v-3h1v3zM1773 1089v-2h1v2zM1774 1089v-3h1v3zM1775 1089v-3h1v3zM1776 1089v-3h1v3zM1777 1089v-2h1v2zM1778 1089v-2h1v2zM1779 1089v-2h1v2zM1780 1089v-3h1v3zM1781 1089v-3h1v3zM1782 1089v-4h1v4zM1783 1089v-4h1v4zM1784 1089v-4h1v4zM1785 1089v-2h1v2zM1786 1089v-2h1v2zM1787 1089v-4h1v4zM1788 1089v-4h1v4zM1789 1089v-3h1v3zM1790 1089v-4h1v4zM1791 1089v-5h1v5zM1792 1089v-4h1v4zM1793 1089v-3h1v3zM1794 1089v-7h1v7zM1795 1089v-4h1v4zM1796 1089v-7h1v7zM1797 1089v-4h1v4zM1798 1089v-3h1v3zM1799 1089v-8h1v8zM1800 1089v-22h1v22zM1801 1089v-18h1v18zM1802 1089v-8h1v8zM1803 1089v-15h1v15zM1804 1089v-8h1v8zM1805 1089v-4h1v4zM1806 1089v-7h1v7zM1807 1089v-3h1v3zM1808 1089v-3h1v3zM1809 1089v-2h1v2zM1810 1089v-3h1v3zM1811 1089v-5h1v5zM1812 1089v-2h1v2zM1813 1089v-2h1v2zM1814 1089v-4h1v4zM1815 1089v-4h1v4zM1816 1089v-2h1v2zM1817 1089v-2h1v2zM1818 1089v-3h1v3zM1819 1089v-2h1v2zM1820 1089v-4h1v4zM1821 1089v-3h1v3zM1822 1089v-2h1v2zM1823 1089v-2h1v2zM1824 1089v-3h1v3zM1825 1089v-5h1v5zM1826 1089v-2h1v2zM1827 1089v-3h1v3zM1828 1089v-4h1v4zM1829 1089v-4h1v4zM1830 1089v-6h1v6zM1831 1089v-3h1v3zM1832 1089v-2h1v2zM1833 1089v-2h1v2zM1834 1089v-2h1v2zM1835 1089v-4h1v4zM1836 1089v-2h1v2zM1837 1089v-4h1v4zM1838 1089v-10h1v10zM1839 1089v-5h1v5zM1840 1089v-5h1v5zM1841 1089v-9h1v9zM1842 1089v-4h1v4zM1843 1089v-6h1v6zM1844 1089v-10h1v10zM1845 1089v-4h1v4zM1846 1089v-2h1v2zM1847 1089v-4h1v4zM1848 1089v-7h1v7zM1849 1089v-3h1v3zM1850 1089v-6h1v6zM1851 1089v-4h1v4zM1852 1089v-3h1v3zM1853 1089v-3h1v3zM1854 1089v-3h1v3z" fill="#5b5bfa"/></svg>
<div class="" style="position:absolute;left:323px;top:1027px;width:15px;height:62px;border:1px solid #ff8000;border-radius:8px;background:rgba(255,160,60,0.18);box-sizing:border-box;"></div>
<div class="" style="position:absolute;left:326px;top:1058px;width:9px;height:1px;background:#ff8000;"></div>
<div class="" style="position:absolute;left:330px;top:1054px;width:1px;height:9px;background:#ff8000;"></div>
<span class="t " style="right:1170.51px;top:907px;height:18px;line-height:18px;font-size:12.6px;color:#3c3c3c;letter-spacing:-1.008px;">97</span>
<span class="t " style="right:1169.57px;top:985px;height:18px;line-height:18px;font-size:12.6px;color:#3c3c3c;letter-spacing:-0.070px;">0</span>
<span class="t " style="left:698px;top:1001px;height:19px;line-height:19px;font-size:12.6px;color:#3c3c3c;letter-spacing:-0.085px;">2012-03-19 11:24:42.440 133 097</span>
<span class="t " style="right:7.08px;top:1001px;height:19px;line-height:19px;font-size:12.6px;color:#3c3c3c;letter-spacing:-0.085px;">2012-03-19 11:24:42.540 133 097</span>
<span class="t " style="right:1546.31px;top:1026px;height:18px;line-height:18px;font-size:12.6px;color:#3c3c3c;letter-spacing:-0.508px;">5641</span>
<span class="t " style="right:1545.87px;top:1074px;height:18px;line-height:18px;font-size:12.6px;color:#3c3c3c;letter-spacing:-0.070px;">0</span>
<span class="t " style="left:322px;top:1091px;height:19px;line-height:19px;font-size:12.6px;color:#3c3c3c;letter-spacing:-0.085px;">2012-03-19 11:24:42.440 133 097</span>
<span class="t " style="right:12.08px;top:1091px;height:19px;line-height:19px;font-size:12.6px;color:#3c3c3c;letter-spacing:-0.085px;">2012-03-19 11:24:52.664 579 801</span>
<div class="" style="position:absolute;left:295px;top:1118px;width:16px;height:16px;background:#5b5bfa;border:1px solid #000;box-sizing:border-box;"></div>
<span class="t " style="left:316px;top:1116px;height:23px;line-height:23px;font-size:14.67px;color:#3c3c3c;letter-spacing:0.341px;">kernel</span>
</body></html>
